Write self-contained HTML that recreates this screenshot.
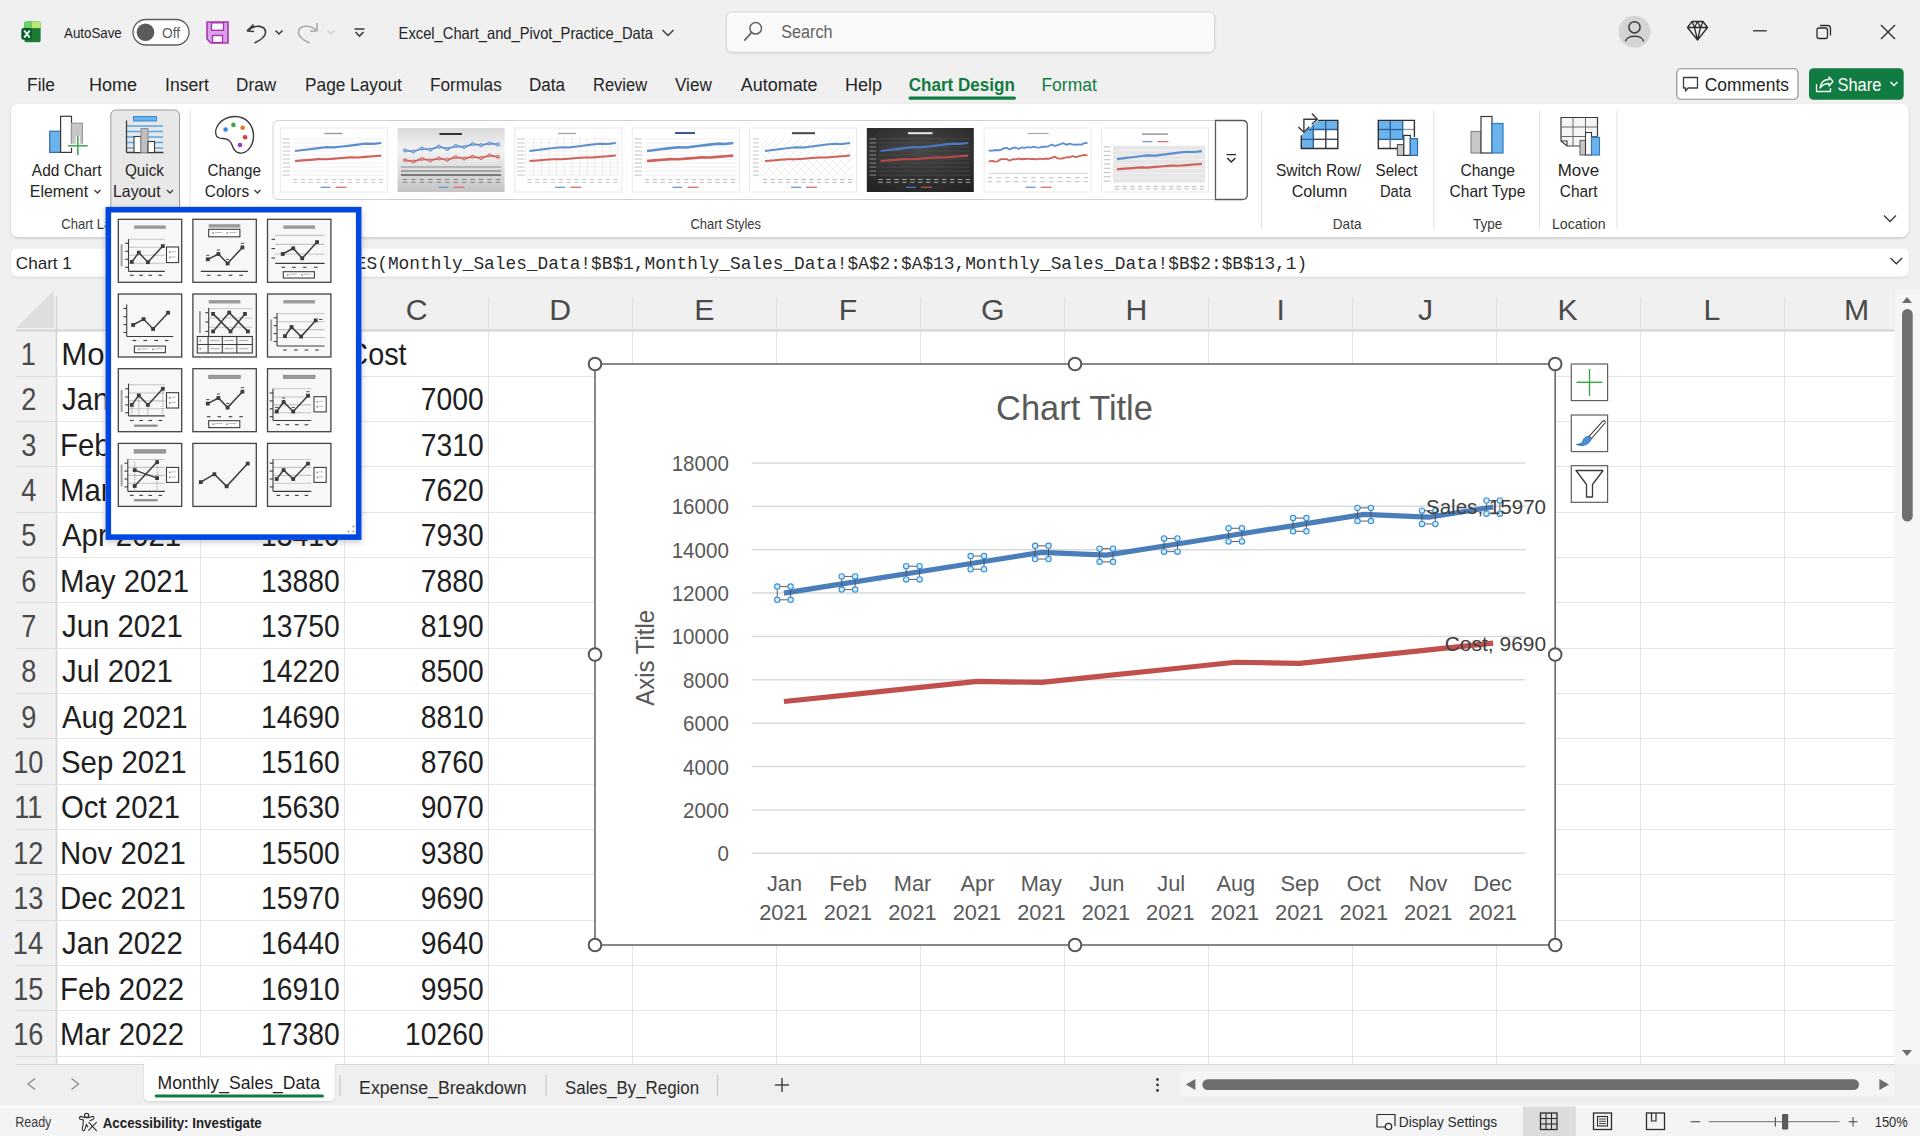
<!DOCTYPE html>
<html><head><meta charset="utf-8"><title>Excel</title>
<style>html,body{margin:0;padding:0;background:#f0f0f0;overflow:hidden;width:1920px;height:1136px}
svg{display:block;font-family:"Liberation Sans",sans-serif}</style></head>
<body><svg width="1920" height="1136" viewBox="0 0 1920 1136">
<rect x="0.00" y="0.00" width="1920.00" height="1136.00" fill="#f0f0f0"/>
<defs><clipPath id="xlc"><rect x="24.2" y="21.3" width="16.6" height="21.1" rx="2.6"/></clipPath></defs>
<g clip-path="url(#xlc)">
<rect x="24.20" y="21.30" width="16.60" height="21.10" fill="#1d7a34"/>
<rect x="24.20" y="21.30" width="7.60" height="6.80" fill="#6bd16a"/>
<rect x="31.80" y="21.30" width="9.00" height="6.80" fill="#bde872"/>
</g>
<rect x="21.30" y="27.90" width="10.50" height="11.90" fill="#0c5a2a" rx="2.20"/>
<path d="M24.2 30.5 L29.7 37.6 M29.7 30.5 L24.2 37.6" fill="none" stroke="#dcfbe9" stroke-width="2.00"/>
<text transform="translate(64.00 37.50) scale(0.9557 1)" font-family="Liberation Sans" font-size="13.95" font-weight="400" fill="#242424">AutoSave</text>
<rect x="133.00" y="19.50" width="56.00" height="25.50" fill="#ffffff" stroke="#5f5f5f" stroke-width="1.30" rx="12.75"/>
<circle cx="145.50" cy="32.20" r="8.80" fill="#5b5b5b"/>
<text transform="translate(162.00 37.50) scale(0.9471 1)" font-family="Liberation Sans" font-size="14.53" font-weight="400" fill="#5b5b5b">Off</text>
<path d="M207 22 H228 V43 H211 L207 39 Z" fill="#dca0e6" stroke="#a339b0" stroke-width="1.60"/>
<rect x="211.50" y="22.80" width="12.00" height="7.50" fill="#ffffff" stroke="#a339b0" stroke-width="1.40"/>
<rect x="212.50" y="35.50" width="10.00" height="7.00" fill="#ffffff" stroke="#a339b0" stroke-width="1.40"/>
<path d="M247 31 L253.5 24.5 M247 31 L254 31.5 M247.5 31 C 254 24 266 25 265.5 33 C 265 37 261 40 254.5 43" fill="none" stroke="#3b3b3b" stroke-width="1.60"/>
<path d="M275.5 30.5 L279 34 L282.5 30.5" fill="none" stroke="#3b3b3b" stroke-width="1.50"/>
<path d="M317 31 L317 23 M317 31 L310 31 M316.5 30.5 C 310 24 298 25 298.5 33 C 299 37 303 40 309.5 43" fill="none" stroke="#a8a8a8" stroke-width="1.60"/>
<path d="M327.5 30.5 L331 34 L334.5 30.5" fill="none" stroke="#cfcfcf" stroke-width="1.50"/>
<line x1="354.50" y1="29.00" x2="364.50" y2="29.00" stroke="#3b3b3b" stroke-width="1.50"/>
<path d="M355.5 32 L359.5 36 L363.5 32" fill="none" stroke="#3b3b3b" stroke-width="1.60"/>
<text transform="translate(398.60 38.70) scale(0.9043 1)" font-family="Liberation Sans" font-size="16.28" font-weight="400" fill="#242424">Excel_Chart_and_Pivot_Practice_Data</text>
<path d="M662.5 30 L668 35.5 L673.5 30" fill="none" stroke="#3b3b3b" stroke-width="1.50"/>
<rect x="726.50" y="12.00" width="488.00" height="40.00" fill="#fafafa" stroke="#d6d6d6" stroke-width="1.00" rx="5.00" filter="url(#sh1)"/>
<circle cx="755.70" cy="28.30" r="5.80" fill="none" stroke="#616161" stroke-width="1.50"/>
<line x1="751.60" y1="32.40" x2="744.30" y2="40.60" stroke="#616161" stroke-width="1.60"/>
<text transform="translate(781.20 38.30) scale(0.9008 1)" font-family="Liberation Sans" font-size="18.02" font-weight="400" fill="#616161">Search</text>
<circle cx="1634.50" cy="31.80" r="16.00" fill="#d4d4d4"/>
<circle cx="1634.50" cy="27.30" r="5.60" fill="none" stroke="#3b3b3b" stroke-width="1.50"/>
<path d="M1625.5 41.5 C 1626 34.5 1643 34.5 1643.5 41.5" fill="none" stroke="#3b3b3b" stroke-width="1.50"/>
<path d="M1687.5 27.5 L1692 21.5 H1703 L1707.5 27.5 L1697.5 40 Z M1687.5 27.5 H1707.5 M1692 21.5 L1694.5 27.5 L1697.5 40 L1700.5 27.5 L1703 21.5 M1697.5 21.5 L1694.5 27.5 M1697.5 21.5 L1700.5 27.5" fill="none" stroke="#2b2b2b" stroke-width="1.30" stroke-linejoin="round"/>
<line x1="1753.00" y1="30.80" x2="1766.70" y2="30.80" stroke="#2b2b2b" stroke-width="1.30"/>
<rect x="1817.00" y="28.00" width="10.50" height="10.50" fill="none" stroke="#2b2b2b" stroke-width="1.30" rx="2.00"/>
<path d="M1820 25.5 H1827.5 C1829.5 25.5 1830.5 26.5 1830.5 28.5 V35.5" fill="none" stroke="#2b2b2b" stroke-width="1.30"/>
<path d="M1881 25 L1895 39 M1895 25 L1881 39" fill="none" stroke="#2b2b2b" stroke-width="1.40"/>
<text transform="translate(27.04 91.20) scale(0.9640 1)" font-family="Liberation Sans" font-size="18.02" font-weight="400" fill="#242424">File</text>
<text transform="translate(89.00 91.20)" font-family="Liberation Sans" font-size="18.02" font-weight="400" fill="#242424">Home</text>
<text transform="translate(165.02 91.20) scale(0.9761 1)" font-family="Liberation Sans" font-size="18.02" font-weight="400" fill="#242424">Insert</text>
<text transform="translate(236.05 91.20) scale(0.9517 1)" font-family="Liberation Sans" font-size="18.02" font-weight="400" fill="#242424">Draw</text>
<text transform="translate(305.04 91.20) scale(0.9584 1)" font-family="Liberation Sans" font-size="18.02" font-weight="400" fill="#242424">Page Layout</text>
<text transform="translate(429.94 91.20) scale(0.9572 1)" font-family="Liberation Sans" font-size="18.02" font-weight="400" fill="#242424">Formulas</text>
<text transform="translate(528.95 91.20) scale(0.9491 1)" font-family="Liberation Sans" font-size="18.02" font-weight="400" fill="#242424">Data</text>
<text transform="translate(592.98 91.20) scale(0.9160 1)" font-family="Liberation Sans" font-size="18.02" font-weight="400" fill="#242424">Review</text>
<text transform="translate(675.00 91.20) scale(0.9493 1)" font-family="Liberation Sans" font-size="18.02" font-weight="400" fill="#242424">View</text>
<text transform="translate(740.80 91.20) scale(0.9962 1)" font-family="Liberation Sans" font-size="18.02" font-weight="400" fill="#242424">Automate</text>
<text transform="translate(845.00 91.20)" font-family="Liberation Sans" font-size="18.02" font-weight="400" fill="#242424">Help</text>
<text transform="translate(908.70 91.20) scale(0.9477 1)" font-family="Liberation Sans" font-size="18.02" font-weight="700" fill="#107c41">Chart Design</text>
<text transform="translate(1041.43 91.20) scale(0.9706 1)" font-family="Liberation Sans" font-size="18.02" font-weight="400" fill="#107c41">Format</text>
<rect x="908.50" y="96.50" width="107.50" height="3.20" fill="#107c41" rx="1.60"/>
<rect x="1676.80" y="68.80" width="121.20" height="30.50" fill="#ffffff" stroke="#8a8a8a" stroke-width="1.10" rx="4.00"/>
<path d="M1683.5 77.5 H1697.5 V88 H1688 L1685.5 91 V88 H1683.5 Z" fill="none" stroke="#3b3b3b" stroke-width="1.30" stroke-linejoin="round"/>
<text transform="translate(1704.70 90.80) scale(0.9680 1)" font-family="Liberation Sans" font-size="18.02" font-weight="400" fill="#242424">Comments</text>
<rect x="1809.00" y="68.30" width="94.70" height="31.40" fill="#107c41" rx="4.50"/>
<path d="M1816.5 84 V91.5 H1830.5 V88 M1820 88 C1821 81 1825 79.5 1829 79.5 V77 L1833 81.5 L1829 86 V83.5 C1825.5 83.5 1822.5 84.5 1820 88 Z" fill="none" stroke="#ffffff" stroke-width="1.30" stroke-linejoin="round"/>
<text transform="translate(1837.50 90.80) scale(0.9115 1)" font-family="Liberation Sans" font-size="18.02" font-weight="400" fill="#ffffff">Share</text>
<path d="M1890.5 82 L1894 85.5 L1897.5 82" fill="none" stroke="#ffffff" stroke-width="1.50"/>
<defs><filter id="sh1" x="-5%" y="-20%" width="110%" height="150%"><feDropShadow dx="0" dy="1" stdDeviation="1" flood-color="#000" flood-opacity="0.12"/></filter><filter id="sh2" x="-2%" y="-10%" width="104%" height="130%"><feDropShadow dx="0" dy="1.5" stdDeviation="1.5" flood-color="#000" flood-opacity="0.16"/></filter><filter id="sh3" x="-10%" y="-10%" width="120%" height="120%"><feDropShadow dx="0" dy="2" stdDeviation="3" flood-color="#000" flood-opacity="0.22"/></filter></defs>
<rect x="11.00" y="104.00" width="1897.50" height="133.00" fill="#ffffff" rx="8.00" filter="url(#sh2)"/>
<rect x="49.70" y="131.20" width="10.90" height="21.20" fill="#6cb2eb" stroke="#2f6fb5" stroke-width="1.20"/>
<rect x="60.60" y="116.30" width="10.90" height="36.10" fill="#ffffff" stroke="#3a3a3a" stroke-width="1.20"/>
<rect x="71.50" y="123.20" width="10.90" height="22.00" fill="#c8c8c8" stroke="#9a9a9a" stroke-width="1.20"/>
<line x1="68.00" y1="145.75" x2="87.60" y2="145.75" stroke="#ffffff" stroke-width="4.00"/>
<line x1="77.80" y1="135.80" x2="77.80" y2="155.30" stroke="#ffffff" stroke-width="4.00"/>
<line x1="68.00" y1="145.75" x2="87.60" y2="145.75" stroke="#4aa552" stroke-width="1.60"/>
<line x1="77.80" y1="135.80" x2="77.80" y2="155.30" stroke="#4aa552" stroke-width="1.60"/>
<text transform="translate(31.80 175.80) scale(0.9523 1)" font-family="Liberation Sans" font-size="16.28" font-weight="400" fill="#242424">Add Chart</text>
<text transform="translate(29.82 197.20) scale(0.9755 1)" font-family="Liberation Sans" font-size="16.28" font-weight="400" fill="#242424">Element</text>
<path d="M94.5 190 L97.5 193 L100.5 190" fill="none" stroke="#3b3b3b" stroke-width="1.30"/>
<rect x="110.80" y="110.00" width="68.70" height="140.00" fill="#e8e8e8" stroke="#9c9c9c" stroke-width="1.00" rx="5.00"/>
<rect x="133.50" y="116.50" width="23.00" height="4.50" fill="#6cb2eb" stroke="#3a8ad6" stroke-width="1.00"/>
<line x1="126.50" y1="126.00" x2="163.00" y2="126.00" stroke="#5aa6e6" stroke-width="1.60"/>
<line x1="126.50" y1="131.50" x2="163.00" y2="131.50" stroke="#5aa6e6" stroke-width="1.60"/>
<line x1="126.50" y1="137.00" x2="163.00" y2="137.00" stroke="#5aa6e6" stroke-width="1.60"/>
<line x1="126.50" y1="142.50" x2="163.00" y2="142.50" stroke="#5aa6e6" stroke-width="1.60"/>
<line x1="126.50" y1="148.00" x2="163.00" y2="148.00" stroke="#5aa6e6" stroke-width="1.60"/>
<line x1="126.50" y1="120.50" x2="126.50" y2="152.50" stroke="#3a3a3a" stroke-width="1.30"/>
<line x1="126.50" y1="152.50" x2="163.50" y2="152.50" stroke="#3a3a3a" stroke-width="1.30"/>
<rect x="134.00" y="136.50" width="7.00" height="16.00" fill="#ffffff" stroke="#3a3a3a" stroke-width="1.10"/>
<rect x="141.00" y="128.50" width="7.00" height="24.00" fill="#c0c0c0" stroke="#909090" stroke-width="1.10"/>
<rect x="148.00" y="141.50" width="6.50" height="11.00" fill="#ffffff" stroke="#3a3a3a" stroke-width="1.10"/>
<text transform="translate(125.00 175.80) scale(0.9353 1)" font-family="Liberation Sans" font-size="16.28" font-weight="400" fill="#242424">Quick</text>
<text transform="translate(113.03 197.20) scale(0.9727 1)" font-family="Liberation Sans" font-size="16.28" font-weight="400" fill="#242424">Layout</text>
<path d="M167 190 L170 193 L173 190" fill="none" stroke="#3b3b3b" stroke-width="1.30"/>
<line x1="190.00" y1="110.00" x2="190.00" y2="206.00" stroke="#e1e1e1" stroke-width="1.00"/>
<path d="M229 140.5 C225 136.5 219 140.5 216.5 136 C213.5 130 219 117.5 234 116.5 C247 116 254 126 253.5 137 C253 147 246 154 239.5 153 C234.5 152.5 233 148 232 145 C231 142.5 230.5 141.5 229 140.5 Z" fill="#ffffff" stroke="#3a3a3a" stroke-width="1.40"/>
<circle cx="225.60" cy="129.50" r="2.30" fill="#2f8be0"/>
<circle cx="233.40" cy="124.90" r="2.30" fill="#3aa845"/>
<circle cx="242.60" cy="127.80" r="2.30" fill="#e8792a"/>
<circle cx="245.10" cy="137.30" r="2.30" fill="#e03e3e"/>
<circle cx="240.00" cy="145.00" r="2.30" fill="#8e3ec4"/>
<text transform="translate(207.60 175.80) scale(0.9380 1)" font-family="Liberation Sans" font-size="16.28" font-weight="400" fill="#242424">Change</text>
<text transform="translate(204.80 197.20) scale(0.9431 1)" font-family="Liberation Sans" font-size="16.28" font-weight="400" fill="#242424">Colors</text>
<path d="M254.5 190 L257.5 193 L260.5 190" fill="none" stroke="#3b3b3b" stroke-width="1.30"/>
<rect x="273.00" y="120.50" width="974.00" height="79.00" fill="#ffffff" stroke="#d1d1d1" stroke-width="1.00" rx="5.00"/>
<path d="M1215.5 120.5 H1242.5 Q1247.3 120.5 1247.3 125.3 V194.7 Q1247.3 199.5 1242.5 199.5 H1215.5 Z" fill="#ffffff" stroke="#5a5a5a" stroke-width="1.30"/>
<line x1="1226.50" y1="154.60" x2="1236.00" y2="154.60" stroke="#2b2b2b" stroke-width="1.30"/>
<path d="M1227.2 158 L1231.3 162 L1235.4 158" fill="none" stroke="#2b2b2b" stroke-width="1.50"/>
<text transform="translate(690.40 228.70) scale(0.8594 1)" font-family="Liberation Sans" font-size="15.12" font-weight="400" fill="#3b3b3b">Chart Styles</text>
<text transform="translate(61.30 228.70) scale(0.8602 1)" font-family="Liberation Sans" font-size="15.12" font-weight="400" fill="#3b3b3b">Chart Layouts</text>
<line x1="1261.50" y1="110.50" x2="1261.50" y2="229.00" stroke="#e1e1e1" stroke-width="1.00"/>
<line x1="1434.00" y1="110.50" x2="1434.00" y2="229.00" stroke="#e1e1e1" stroke-width="1.00"/>
<line x1="1539.60" y1="110.50" x2="1539.60" y2="229.00" stroke="#e1e1e1" stroke-width="1.00"/>
<line x1="1617.00" y1="110.50" x2="1617.00" y2="229.00" stroke="#e1e1e1" stroke-width="1.00"/>
<rect x="1301.30" y="120.40" width="36.50" height="28.10" fill="#ffffff"/>
<rect x="1301.30" y="120.40" width="36.50" height="9.10" fill="#6cb2eb"/>
<rect x="1301.30" y="120.40" width="12.00" height="28.10" fill="#6cb2eb"/>
<line x1="1301.30" y1="129.50" x2="1337.80" y2="129.50" stroke="#2a5f9a" stroke-width="1.30"/>
<line x1="1301.30" y1="139.40" x2="1337.80" y2="139.40" stroke="#2a5f9a" stroke-width="1.30"/>
<line x1="1313.30" y1="120.40" x2="1313.30" y2="148.50" stroke="#2a5f9a" stroke-width="1.30"/>
<line x1="1325.70" y1="120.40" x2="1325.70" y2="148.50" stroke="#2a5f9a" stroke-width="1.30"/>
<line x1="1313.30" y1="139.40" x2="1337.80" y2="139.40" stroke="#4a4a4a" stroke-width="1.30"/>
<line x1="1325.70" y1="129.50" x2="1325.70" y2="148.50" stroke="#4a4a4a" stroke-width="1.30"/>
<path d="M1301.3 134 V148.5 H1337.8 V120.4 H1318" fill="none" stroke="#2f2f2f" stroke-width="1.40"/>
<path d="M1300 119 H1319.5 L1300 136.5 Z" fill="#ffffff"/>
<path d="M1296 137 L1322 113" fill="none" stroke="#ffffff" stroke-width="3.20"/>
<path d="M1303.9 131.5 V119.3 H1317" fill="none" stroke="#3a3a3a" stroke-width="1.40"/>
<path d="M1311.8 113.6 L1317.3 119.2 L1311.8 124.2" fill="none" stroke="#3a3a3a" stroke-width="1.40"/>
<path d="M1298.3 127 L1303.9 132.3 L1309.3 126.8" fill="none" stroke="#3a3a3a" stroke-width="1.40"/>
<text transform="translate(1276.00 175.80) scale(0.9515 1)" font-family="Liberation Sans" font-size="16.28" font-weight="400" fill="#242424">Switch Row/</text>
<text transform="translate(1291.70 197.20) scale(0.9909 1)" font-family="Liberation Sans" font-size="16.28" font-weight="400" fill="#242424">Column</text>
<rect x="1378.30" y="120.40" width="36.10" height="28.10" fill="#ffffff"/>
<rect x="1378.30" y="120.40" width="24.40" height="19.00" fill="#6cb2eb"/>
<line x1="1378.30" y1="129.50" x2="1402.70" y2="129.50" stroke="#2a5f9a" stroke-width="1.30"/>
<line x1="1402.70" y1="129.50" x2="1414.40" y2="129.50" stroke="#9a9a9a" stroke-width="1.30"/>
<line x1="1390.30" y1="120.40" x2="1390.30" y2="148.50" stroke="#2a5f9a" stroke-width="1.30"/>
<line x1="1378.30" y1="139.40" x2="1402.70" y2="139.40" stroke="#2a5f9a" stroke-width="1.30"/>
<line x1="1402.70" y1="120.40" x2="1402.70" y2="139.40" stroke="#2a5f9a" stroke-width="1.30"/>
<line x1="1390.30" y1="139.40" x2="1390.30" y2="148.50" stroke="#8a8a8a" stroke-width="1.30"/>
<path d="M1398 148.5 H1378.3 V120.4 H1414.4 V137" fill="none" stroke="#2f2f2f" stroke-width="1.40"/>
<rect x="1397.40" y="144.60" width="6.40" height="10.80" fill="#c8c8c8" stroke="#5a5a5a" stroke-width="1.20"/>
<rect x="1403.80" y="135.40" width="6.50" height="20.00" fill="#ffffff" stroke="#2f2f2f" stroke-width="1.20"/>
<rect x="1410.30" y="138.60" width="7.20" height="16.80" fill="#6cb2eb" stroke="#2a6ab0" stroke-width="1.20"/>
<text transform="translate(1375.60 175.80) scale(0.9280 1)" font-family="Liberation Sans" font-size="16.28" font-weight="400" fill="#242424">Select</text>
<text transform="translate(1379.89 197.20) scale(0.9093 1)" font-family="Liberation Sans" font-size="16.28" font-weight="400" fill="#242424">Data</text>
<text transform="translate(1332.80 228.70) scale(0.8981 1)" font-family="Liberation Sans" font-size="15.12" font-weight="400" fill="#3b3b3b">Data</text>
<rect x="1471.00" y="131.50" width="10.00" height="21.50" fill="#c8c8c8" stroke="#8a8a8a" stroke-width="1.20"/>
<rect x="1481.00" y="116.50" width="11.00" height="36.50" fill="#ffffff" stroke="#3a3a3a" stroke-width="1.20"/>
<rect x="1492.00" y="123.50" width="11.00" height="29.50" fill="#6cb2eb" stroke="#2a7ac4" stroke-width="1.20"/>
<text transform="translate(1460.40 175.80) scale(0.9591 1)" font-family="Liberation Sans" font-size="16.28" font-weight="400" fill="#242424">Change</text>
<text transform="translate(1449.60 197.20) scale(0.9558 1)" font-family="Liberation Sans" font-size="16.28" font-weight="400" fill="#242424">Chart Type</text>
<text transform="translate(1473.00 228.70) scale(0.8963 1)" font-family="Liberation Sans" font-size="15.12" font-weight="400" fill="#3b3b3b">Type</text>
<path d="M1561 117.5 H1597.5 V146 H1567 L1561 141 Z" fill="#f5f5f5" stroke="#3a3a3a" stroke-width="1.20"/>
<line x1="1561.00" y1="127.00" x2="1597.50" y2="127.00" stroke="#6a6a6a" stroke-width="1.00"/>
<line x1="1561.00" y1="136.50" x2="1597.50" y2="136.50" stroke="#6a6a6a" stroke-width="1.00"/>
<line x1="1573.00" y1="117.50" x2="1573.00" y2="146.00" stroke="#6a6a6a" stroke-width="1.00"/>
<line x1="1585.50" y1="117.50" x2="1585.50" y2="146.00" stroke="#6a6a6a" stroke-width="1.00"/>
<path d="M1561 141 H1567 V146" fill="none" stroke="#3a3a3a" stroke-width="1.10"/>
<rect x="1580.00" y="140.50" width="5.50" height="14.50" fill="#c8c8c8" stroke="#6a6a6a" stroke-width="1.10"/>
<rect x="1585.50" y="132.50" width="6.00" height="22.50" fill="#ffffff" stroke="#3a3a3a" stroke-width="1.10"/>
<rect x="1591.50" y="137.50" width="8.00" height="17.50" fill="#6cb2eb" stroke="#2a7ac4" stroke-width="1.10"/>
<text transform="translate(1557.76 175.80) scale(1.0380 1)" font-family="Liberation Sans" font-size="16.28" font-weight="400" fill="#242424">Move</text>
<text transform="translate(1559.80 197.20) scale(0.9465 1)" font-family="Liberation Sans" font-size="16.28" font-weight="400" fill="#242424">Chart</text>
<text transform="translate(1551.96 228.70) scale(0.9386 1)" font-family="Liberation Sans" font-size="15.12" font-weight="400" fill="#3b3b3b">Location</text>
<path d="M1884 215.5 L1890 221.5 L1896 215.5" fill="none" stroke="#3b3b3b" stroke-width="1.40"/>
<rect x="11.50" y="248.50" width="1897.00" height="28.00" fill="#ffffff" rx="5.00" filter="url(#sh1)"/>
<text transform="translate(15.80 269.00) scale(0.9968 1)" font-family="Liberation Sans" font-size="17.15" font-weight="400" fill="#1f1f1f">Chart 1</text>
<text transform="translate(302.40 269.00)" font-family="Liberation Mono" font-size="17.82" font-weight="400" fill="#2b2b2b">=SERIES(Monthly_Sales_Data!$B$1,Monthly_Sales_Data!$A$2:$A$13,Monthly_Sales_Data!$B$2:$B$13,1)</text>
<path d="M1890.5 258 L1896.3 263.8 L1902.1 258" fill="none" stroke="#3b3b3b" stroke-width="1.40"/>
<rect x="56.80" y="331.00" width="1837.70" height="733.00" fill="#ffffff"/>
<path d="M54 290.5 V328 H16 Z" fill="#dedede"/>
<line x1="16.00" y1="330.50" x2="1894.50" y2="330.50" stroke="#d4d4d4" stroke-width="2.00"/>
<line x1="56.50" y1="296.00" x2="56.50" y2="1064.00" stroke="#d4d4d4" stroke-width="1.50"/>
<line x1="16.00" y1="376.50" x2="56.50" y2="376.50" stroke="#dcdcdc" stroke-width="1.00"/>
<line x1="56.50" y1="376.50" x2="1894.50" y2="376.50" stroke="#e4e4e4" stroke-width="1.00"/>
<line x1="16.00" y1="421.50" x2="56.50" y2="421.50" stroke="#dcdcdc" stroke-width="1.00"/>
<line x1="56.50" y1="421.50" x2="1894.50" y2="421.50" stroke="#e4e4e4" stroke-width="1.00"/>
<line x1="16.00" y1="466.50" x2="56.50" y2="466.50" stroke="#dcdcdc" stroke-width="1.00"/>
<line x1="56.50" y1="466.50" x2="1894.50" y2="466.50" stroke="#e4e4e4" stroke-width="1.00"/>
<line x1="16.00" y1="512.50" x2="56.50" y2="512.50" stroke="#dcdcdc" stroke-width="1.00"/>
<line x1="56.50" y1="512.50" x2="1894.50" y2="512.50" stroke="#e4e4e4" stroke-width="1.00"/>
<line x1="16.00" y1="557.50" x2="56.50" y2="557.50" stroke="#dcdcdc" stroke-width="1.00"/>
<line x1="56.50" y1="557.50" x2="1894.50" y2="557.50" stroke="#e4e4e4" stroke-width="1.00"/>
<line x1="16.00" y1="602.50" x2="56.50" y2="602.50" stroke="#dcdcdc" stroke-width="1.00"/>
<line x1="56.50" y1="602.50" x2="1894.50" y2="602.50" stroke="#e4e4e4" stroke-width="1.00"/>
<line x1="16.00" y1="648.50" x2="56.50" y2="648.50" stroke="#dcdcdc" stroke-width="1.00"/>
<line x1="56.50" y1="648.50" x2="1894.50" y2="648.50" stroke="#e4e4e4" stroke-width="1.00"/>
<line x1="16.00" y1="693.50" x2="56.50" y2="693.50" stroke="#dcdcdc" stroke-width="1.00"/>
<line x1="56.50" y1="693.50" x2="1894.50" y2="693.50" stroke="#e4e4e4" stroke-width="1.00"/>
<line x1="16.00" y1="738.50" x2="56.50" y2="738.50" stroke="#dcdcdc" stroke-width="1.00"/>
<line x1="56.50" y1="738.50" x2="1894.50" y2="738.50" stroke="#e4e4e4" stroke-width="1.00"/>
<line x1="16.00" y1="784.50" x2="56.50" y2="784.50" stroke="#dcdcdc" stroke-width="1.00"/>
<line x1="56.50" y1="784.50" x2="1894.50" y2="784.50" stroke="#e4e4e4" stroke-width="1.00"/>
<line x1="16.00" y1="829.50" x2="56.50" y2="829.50" stroke="#dcdcdc" stroke-width="1.00"/>
<line x1="56.50" y1="829.50" x2="1894.50" y2="829.50" stroke="#e4e4e4" stroke-width="1.00"/>
<line x1="16.00" y1="874.50" x2="56.50" y2="874.50" stroke="#dcdcdc" stroke-width="1.00"/>
<line x1="56.50" y1="874.50" x2="1894.50" y2="874.50" stroke="#e4e4e4" stroke-width="1.00"/>
<line x1="16.00" y1="920.50" x2="56.50" y2="920.50" stroke="#dcdcdc" stroke-width="1.00"/>
<line x1="56.50" y1="920.50" x2="1894.50" y2="920.50" stroke="#e4e4e4" stroke-width="1.00"/>
<line x1="16.00" y1="965.50" x2="56.50" y2="965.50" stroke="#dcdcdc" stroke-width="1.00"/>
<line x1="56.50" y1="965.50" x2="1894.50" y2="965.50" stroke="#e4e4e4" stroke-width="1.00"/>
<line x1="16.00" y1="1010.50" x2="56.50" y2="1010.50" stroke="#dcdcdc" stroke-width="1.00"/>
<line x1="56.50" y1="1010.50" x2="1894.50" y2="1010.50" stroke="#e4e4e4" stroke-width="1.00"/>
<line x1="16.00" y1="1056.50" x2="56.50" y2="1056.50" stroke="#dcdcdc" stroke-width="1.00"/>
<line x1="56.50" y1="1056.50" x2="1894.50" y2="1056.50" stroke="#e4e4e4" stroke-width="1.00"/>
<line x1="200.50" y1="297.00" x2="200.50" y2="329.00" stroke="#dedede" stroke-width="1.00"/>
<line x1="200.50" y1="331.00" x2="200.50" y2="1064.00" stroke="#e4e4e4" stroke-width="1.00"/>
<line x1="344.50" y1="297.00" x2="344.50" y2="329.00" stroke="#dedede" stroke-width="1.00"/>
<line x1="344.50" y1="331.00" x2="344.50" y2="1064.00" stroke="#e4e4e4" stroke-width="1.00"/>
<line x1="488.50" y1="297.00" x2="488.50" y2="329.00" stroke="#dedede" stroke-width="1.00"/>
<line x1="488.50" y1="331.00" x2="488.50" y2="1064.00" stroke="#e4e4e4" stroke-width="1.00"/>
<line x1="632.50" y1="297.00" x2="632.50" y2="329.00" stroke="#dedede" stroke-width="1.00"/>
<line x1="632.50" y1="331.00" x2="632.50" y2="1064.00" stroke="#e4e4e4" stroke-width="1.00"/>
<line x1="776.50" y1="297.00" x2="776.50" y2="329.00" stroke="#dedede" stroke-width="1.00"/>
<line x1="776.50" y1="331.00" x2="776.50" y2="1064.00" stroke="#e4e4e4" stroke-width="1.00"/>
<line x1="920.50" y1="297.00" x2="920.50" y2="329.00" stroke="#dedede" stroke-width="1.00"/>
<line x1="920.50" y1="331.00" x2="920.50" y2="1064.00" stroke="#e4e4e4" stroke-width="1.00"/>
<line x1="1064.50" y1="297.00" x2="1064.50" y2="329.00" stroke="#dedede" stroke-width="1.00"/>
<line x1="1064.50" y1="331.00" x2="1064.50" y2="1064.00" stroke="#e4e4e4" stroke-width="1.00"/>
<line x1="1208.50" y1="297.00" x2="1208.50" y2="329.00" stroke="#dedede" stroke-width="1.00"/>
<line x1="1208.50" y1="331.00" x2="1208.50" y2="1064.00" stroke="#e4e4e4" stroke-width="1.00"/>
<line x1="1352.50" y1="297.00" x2="1352.50" y2="329.00" stroke="#dedede" stroke-width="1.00"/>
<line x1="1352.50" y1="331.00" x2="1352.50" y2="1064.00" stroke="#e4e4e4" stroke-width="1.00"/>
<line x1="1496.50" y1="297.00" x2="1496.50" y2="329.00" stroke="#dedede" stroke-width="1.00"/>
<line x1="1496.50" y1="331.00" x2="1496.50" y2="1064.00" stroke="#e4e4e4" stroke-width="1.00"/>
<line x1="1640.50" y1="297.00" x2="1640.50" y2="329.00" stroke="#dedede" stroke-width="1.00"/>
<line x1="1640.50" y1="331.00" x2="1640.50" y2="1064.00" stroke="#e4e4e4" stroke-width="1.00"/>
<line x1="1784.50" y1="297.00" x2="1784.50" y2="329.00" stroke="#dedede" stroke-width="1.00"/>
<line x1="1784.50" y1="331.00" x2="1784.50" y2="1064.00" stroke="#e4e4e4" stroke-width="1.00"/>
<text transform="translate(118.28 319.70)" font-family="Liberation Sans" font-size="30.23" font-weight="400" fill="#4a4a4a">A</text>
<text transform="translate(262.25 319.70)" font-family="Liberation Sans" font-size="30.23" font-weight="400" fill="#4a4a4a">B</text>
<text transform="translate(405.73 319.70)" font-family="Liberation Sans" font-size="30.23" font-weight="400" fill="#4a4a4a">C</text>
<text transform="translate(549.19 319.70)" font-family="Liberation Sans" font-size="30.23" font-weight="400" fill="#4a4a4a">D</text>
<text transform="translate(694.16 319.70)" font-family="Liberation Sans" font-size="30.23" font-weight="400" fill="#4a4a4a">E</text>
<text transform="translate(838.63 319.70)" font-family="Liberation Sans" font-size="30.23" font-weight="400" fill="#4a4a4a">F</text>
<text transform="translate(981.10 319.70)" font-family="Liberation Sans" font-size="30.23" font-weight="400" fill="#4a4a4a">G</text>
<text transform="translate(1125.58 319.70)" font-family="Liberation Sans" font-size="30.23" font-weight="400" fill="#4a4a4a">H</text>
<text transform="translate(1276.54 319.70)" font-family="Liberation Sans" font-size="30.23" font-weight="400" fill="#4a4a4a">I</text>
<text transform="translate(1418.01 319.70)" font-family="Liberation Sans" font-size="30.23" font-weight="400" fill="#4a4a4a">J</text>
<text transform="translate(1557.48 319.70)" font-family="Liberation Sans" font-size="30.23" font-weight="400" fill="#4a4a4a">K</text>
<text transform="translate(1703.45 319.70)" font-family="Liberation Sans" font-size="30.23" font-weight="400" fill="#4a4a4a">L</text>
<text transform="translate(1843.92 319.70)" font-family="Liberation Sans" font-size="30.23" font-weight="400" fill="#4a4a4a">M</text>
<text transform="translate(20.79 364.90) scale(0.8900 1)" font-family="Liberation Sans" font-size="30.52" font-weight="400" fill="#4a4a4a">1</text>
<text transform="translate(61.19 364.90) scale(1.0069 1)" font-family="Liberation Sans" font-size="31.00" font-weight="400" fill="#1e1e1e">Mo</text>
<text transform="translate(205.07 364.90) scale(0.9300 1)" font-family="Liberation Sans" font-size="31.00" font-weight="400" fill="#1e1e1e">Sales</text>
<text transform="translate(347.37 364.90) scale(0.9300 1)" font-family="Liberation Sans" font-size="31.00" font-weight="400" fill="#1e1e1e">Cost</text>
<text transform="translate(21.23 410.23) scale(0.8900 1)" font-family="Liberation Sans" font-size="30.52" font-weight="400" fill="#4a4a4a">2</text>
<text transform="translate(62.00 410.23) scale(0.9470 1)" font-family="Liberation Sans" font-size="31.00" font-weight="400" fill="#1e1e1e">Jan 2021</text>
<text transform="translate(261.10 410.23) scale(0.9120 1)" font-family="Liberation Sans" font-size="31.00" font-weight="400" fill="#1e1e1e">12000</text>
<text transform="translate(420.83 410.23) scale(0.9120 1)" font-family="Liberation Sans" font-size="31.00" font-weight="400" fill="#1e1e1e">7000</text>
<text transform="translate(21.23 455.56) scale(0.8900 1)" font-family="Liberation Sans" font-size="30.52" font-weight="400" fill="#4a4a4a">3</text>
<text transform="translate(60.11 455.56) scale(0.9470 1)" font-family="Liberation Sans" font-size="31.00" font-weight="400" fill="#1e1e1e">Feb 2021</text>
<text transform="translate(261.10 455.56) scale(0.9120 1)" font-family="Liberation Sans" font-size="31.00" font-weight="400" fill="#1e1e1e">12470</text>
<text transform="translate(420.83 455.56) scale(0.9120 1)" font-family="Liberation Sans" font-size="31.00" font-weight="400" fill="#1e1e1e">7310</text>
<text transform="translate(21.23 500.89) scale(0.8900 1)" font-family="Liberation Sans" font-size="30.52" font-weight="400" fill="#4a4a4a">4</text>
<text transform="translate(60.11 500.89) scale(0.9470 1)" font-family="Liberation Sans" font-size="31.00" font-weight="400" fill="#1e1e1e">Mar 2021</text>
<text transform="translate(261.10 500.89) scale(0.9120 1)" font-family="Liberation Sans" font-size="31.00" font-weight="400" fill="#1e1e1e">12940</text>
<text transform="translate(420.83 500.89) scale(0.9120 1)" font-family="Liberation Sans" font-size="31.00" font-weight="400" fill="#1e1e1e">7620</text>
<text transform="translate(21.23 546.22) scale(0.8900 1)" font-family="Liberation Sans" font-size="30.52" font-weight="400" fill="#4a4a4a">5</text>
<text transform="translate(62.00 546.22) scale(0.9470 1)" font-family="Liberation Sans" font-size="31.00" font-weight="400" fill="#1e1e1e">Apr 2021</text>
<text transform="translate(261.10 546.22) scale(0.9120 1)" font-family="Liberation Sans" font-size="31.00" font-weight="400" fill="#1e1e1e">13410</text>
<text transform="translate(420.83 546.22) scale(0.9120 1)" font-family="Liberation Sans" font-size="31.00" font-weight="400" fill="#1e1e1e">7930</text>
<text transform="translate(21.23 591.55) scale(0.8900 1)" font-family="Liberation Sans" font-size="30.52" font-weight="400" fill="#4a4a4a">6</text>
<text transform="translate(60.11 591.55) scale(0.9470 1)" font-family="Liberation Sans" font-size="31.00" font-weight="400" fill="#1e1e1e">May 2021</text>
<text transform="translate(261.10 591.55) scale(0.9120 1)" font-family="Liberation Sans" font-size="31.00" font-weight="400" fill="#1e1e1e">13880</text>
<text transform="translate(420.83 591.55) scale(0.9120 1)" font-family="Liberation Sans" font-size="31.00" font-weight="400" fill="#1e1e1e">7880</text>
<text transform="translate(21.23 636.88) scale(0.8900 1)" font-family="Liberation Sans" font-size="30.52" font-weight="400" fill="#4a4a4a">7</text>
<text transform="translate(62.00 636.88) scale(0.9470 1)" font-family="Liberation Sans" font-size="31.00" font-weight="400" fill="#1e1e1e">Jun 2021</text>
<text transform="translate(261.10 636.88) scale(0.9120 1)" font-family="Liberation Sans" font-size="31.00" font-weight="400" fill="#1e1e1e">13750</text>
<text transform="translate(420.83 636.88) scale(0.9120 1)" font-family="Liberation Sans" font-size="31.00" font-weight="400" fill="#1e1e1e">8190</text>
<text transform="translate(21.23 682.21) scale(0.8900 1)" font-family="Liberation Sans" font-size="30.52" font-weight="400" fill="#4a4a4a">8</text>
<text transform="translate(62.00 682.21) scale(0.9470 1)" font-family="Liberation Sans" font-size="31.00" font-weight="400" fill="#1e1e1e">Jul 2021</text>
<text transform="translate(261.10 682.21) scale(0.9120 1)" font-family="Liberation Sans" font-size="31.00" font-weight="400" fill="#1e1e1e">14220</text>
<text transform="translate(420.83 682.21) scale(0.9120 1)" font-family="Liberation Sans" font-size="31.00" font-weight="400" fill="#1e1e1e">8500</text>
<text transform="translate(21.23 727.54) scale(0.8900 1)" font-family="Liberation Sans" font-size="30.52" font-weight="400" fill="#4a4a4a">9</text>
<text transform="translate(62.00 727.54) scale(0.9470 1)" font-family="Liberation Sans" font-size="31.00" font-weight="400" fill="#1e1e1e">Aug 2021</text>
<text transform="translate(261.10 727.54) scale(0.9120 1)" font-family="Liberation Sans" font-size="31.00" font-weight="400" fill="#1e1e1e">14690</text>
<text transform="translate(420.83 727.54) scale(0.9120 1)" font-family="Liberation Sans" font-size="31.00" font-weight="400" fill="#1e1e1e">8810</text>
<text transform="translate(13.24 772.87) scale(0.8900 1)" font-family="Liberation Sans" font-size="30.52" font-weight="400" fill="#4a4a4a">10</text>
<text transform="translate(61.05 772.87) scale(0.9470 1)" font-family="Liberation Sans" font-size="31.00" font-weight="400" fill="#1e1e1e">Sep 2021</text>
<text transform="translate(261.10 772.87) scale(0.9120 1)" font-family="Liberation Sans" font-size="31.00" font-weight="400" fill="#1e1e1e">15160</text>
<text transform="translate(420.83 772.87) scale(0.9120 1)" font-family="Liberation Sans" font-size="31.00" font-weight="400" fill="#1e1e1e">8760</text>
<text transform="translate(14.25 818.20) scale(0.8900 1)" font-family="Liberation Sans" font-size="30.52" font-weight="400" fill="#4a4a4a">11</text>
<text transform="translate(61.05 818.20) scale(0.9470 1)" font-family="Liberation Sans" font-size="31.00" font-weight="400" fill="#1e1e1e">Oct 2021</text>
<text transform="translate(261.10 818.20) scale(0.9120 1)" font-family="Liberation Sans" font-size="31.00" font-weight="400" fill="#1e1e1e">15630</text>
<text transform="translate(420.83 818.20) scale(0.9120 1)" font-family="Liberation Sans" font-size="31.00" font-weight="400" fill="#1e1e1e">9070</text>
<text transform="translate(13.24 863.53) scale(0.8900 1)" font-family="Liberation Sans" font-size="30.52" font-weight="400" fill="#4a4a4a">12</text>
<text transform="translate(60.11 863.53) scale(0.9470 1)" font-family="Liberation Sans" font-size="31.00" font-weight="400" fill="#1e1e1e">Nov 2021</text>
<text transform="translate(261.10 863.53) scale(0.9120 1)" font-family="Liberation Sans" font-size="31.00" font-weight="400" fill="#1e1e1e">15500</text>
<text transform="translate(420.83 863.53) scale(0.9120 1)" font-family="Liberation Sans" font-size="31.00" font-weight="400" fill="#1e1e1e">9380</text>
<text transform="translate(13.24 908.86) scale(0.8900 1)" font-family="Liberation Sans" font-size="30.52" font-weight="400" fill="#4a4a4a">13</text>
<text transform="translate(60.11 908.86) scale(0.9470 1)" font-family="Liberation Sans" font-size="31.00" font-weight="400" fill="#1e1e1e">Dec 2021</text>
<text transform="translate(261.10 908.86) scale(0.9120 1)" font-family="Liberation Sans" font-size="31.00" font-weight="400" fill="#1e1e1e">15970</text>
<text transform="translate(420.83 908.86) scale(0.9120 1)" font-family="Liberation Sans" font-size="31.00" font-weight="400" fill="#1e1e1e">9690</text>
<text transform="translate(12.79 954.19) scale(0.8900 1)" font-family="Liberation Sans" font-size="30.52" font-weight="400" fill="#4a4a4a">14</text>
<text transform="translate(62.00 954.19) scale(0.9470 1)" font-family="Liberation Sans" font-size="31.00" font-weight="400" fill="#1e1e1e">Jan 2022</text>
<text transform="translate(261.10 954.19) scale(0.9120 1)" font-family="Liberation Sans" font-size="31.00" font-weight="400" fill="#1e1e1e">16440</text>
<text transform="translate(420.83 954.19) scale(0.9120 1)" font-family="Liberation Sans" font-size="31.00" font-weight="400" fill="#1e1e1e">9640</text>
<text transform="translate(13.24 999.52) scale(0.8900 1)" font-family="Liberation Sans" font-size="30.52" font-weight="400" fill="#4a4a4a">15</text>
<text transform="translate(60.11 999.52) scale(0.9470 1)" font-family="Liberation Sans" font-size="31.00" font-weight="400" fill="#1e1e1e">Feb 2022</text>
<text transform="translate(261.10 999.52) scale(0.9120 1)" font-family="Liberation Sans" font-size="31.00" font-weight="400" fill="#1e1e1e">16910</text>
<text transform="translate(420.83 999.52) scale(0.9120 1)" font-family="Liberation Sans" font-size="31.00" font-weight="400" fill="#1e1e1e">9950</text>
<text transform="translate(13.24 1044.85) scale(0.8900 1)" font-family="Liberation Sans" font-size="30.52" font-weight="400" fill="#4a4a4a">16</text>
<text transform="translate(60.11 1044.85) scale(0.9470 1)" font-family="Liberation Sans" font-size="31.00" font-weight="400" fill="#1e1e1e">Mar 2022</text>
<text transform="translate(261.10 1044.85) scale(0.9120 1)" font-family="Liberation Sans" font-size="31.00" font-weight="400" fill="#1e1e1e">17380</text>
<text transform="translate(405.10 1044.85) scale(0.9120 1)" font-family="Liberation Sans" font-size="31.00" font-weight="400" fill="#1e1e1e">10260</text>
<rect x="1895.00" y="290.00" width="25.00" height="774.00" fill="#f5f5f5"/>
<path d="M1902 303 L1907 297 L1912 303 Z" fill="#6e6e6e"/>
<rect x="1902.00" y="309.00" width="10.70" height="212.50" fill="#707070" rx="5.30"/>
<path d="M1902 1050 L1907 1056 L1912 1050 Z" fill="#6e6e6e"/>
<rect x="0.00" y="1064.00" width="1920.00" height="42.00" fill="#efefef"/>
<line x1="16.00" y1="1064.50" x2="1894.50" y2="1064.50" stroke="#d8d8d8" stroke-width="1.00"/>
<path d="M35 1078.5 L28 1084 L35 1089.5" fill="none" stroke="#8a8a8a" stroke-width="1.30"/>
<path d="M71.5 1078.5 L78.5 1084 L71.5 1089.5" fill="none" stroke="#8a8a8a" stroke-width="1.30"/>
<rect x="144.00" y="1058.00" width="190.70" height="43.00" fill="#ffffff" rx="5.00" filter="url(#sh1)"/>
<rect x="144.00" y="1058.00" width="190.70" height="8.00" fill="#ffffff"/>
<text transform="translate(157.47 1088.80) scale(0.9322 1)" font-family="Liberation Sans" font-size="18.90" font-weight="400" fill="#1f1f1f">Monthly_Sales_Data</text>
<rect x="154.70" y="1094.40" width="169.30" height="3.00" fill="#107c41" rx="1.50"/>
<line x1="340.00" y1="1075.00" x2="340.00" y2="1096.00" stroke="#c8c8c8" stroke-width="1.20"/>
<text transform="translate(359.06 1093.50) scale(0.9385 1)" font-family="Liberation Sans" font-size="18.90" font-weight="400" fill="#2b2b2b">Expense_Breakdown</text>
<line x1="546.00" y1="1075.00" x2="546.00" y2="1096.00" stroke="#c8c8c8" stroke-width="1.20"/>
<text transform="translate(565.00 1093.50) scale(0.8927 1)" font-family="Liberation Sans" font-size="18.90" font-weight="400" fill="#2b2b2b">Sales_By_Region</text>
<line x1="717.50" y1="1075.00" x2="717.50" y2="1096.00" stroke="#c8c8c8" stroke-width="1.20"/>
<line x1="775.00" y1="1085.00" x2="789.00" y2="1085.00" stroke="#3b3b3b" stroke-width="1.40"/>
<line x1="782.00" y1="1078.00" x2="782.00" y2="1092.00" stroke="#3b3b3b" stroke-width="1.40"/>
<circle cx="1157.50" cy="1079.50" r="1.40" fill="#3b3b3b"/>
<circle cx="1157.50" cy="1085.00" r="1.40" fill="#3b3b3b"/>
<circle cx="1157.50" cy="1090.50" r="1.40" fill="#3b3b3b"/>
<rect x="1180.00" y="1071.60" width="715.00" height="25.00" fill="#f5f5f5" rx="4.00"/>
<path d="M1195.4 1079 L1185.8 1084.5 L1195.4 1090 Z" fill="#6e6e6e"/>
<rect x="1202.40" y="1079.30" width="656.60" height="10.70" fill="#6e6e6e" rx="5.35"/>
<path d="M1879.4 1079 L1889 1084.5 L1879.4 1090 Z" fill="#6e6e6e"/>
<rect x="0.00" y="1106.00" width="1920.00" height="30.00" fill="#f4f4f4"/>
<line x1="0.00" y1="1106.50" x2="1920.00" y2="1106.50" stroke="#fbfbfb" stroke-width="2.00"/>
<text transform="translate(15.15 1127.30) scale(0.8465 1)" font-family="Liberation Sans" font-size="14.83" font-weight="400" fill="#3b3b3b">Ready</text>
<circle cx="86.60" cy="1115.30" r="2.10" fill="none" stroke="#2b2b2b" stroke-width="1.15"/>
<path d="M89.6 1120.8 L92.4 1119.7 C94.6 1118.9 94.4 1115.9 92.2 1116.5 L88.6 1117.6 L85 1117.7 L80.8 1116.4 C78.8 1116.9 79.2 1119.6 81.2 1119.5 L83.3 1119.9 C83.6 1122.5 82.9 1126 82.3 1128.5 C81.8 1130.8 84.4 1131.3 84.9 1129.3 L86.4 1124.3 L87.8 1127.2" fill="none" stroke="#2b2b2b" stroke-width="1.10" stroke-linejoin="round"/>
<path d="M88.6 1122.2 L96.8 1131 M96.7 1122.2 L88.3 1130.6" fill="none" stroke="#2b2b2b" stroke-width="1.10"/>
<text transform="translate(102.75 1127.60) scale(0.8987 1)" font-family="Liberation Sans" font-size="14.83" font-weight="700" fill="#1f1f1f">Accessibility: Investigate</text>
<path d="M1377 1114.5 H1395 V1126 M1377 1114.5 V1127 H1386" fill="none" stroke="#2b2b2b" stroke-width="1.20"/>
<circle cx="1388.50" cy="1126.50" r="3.20" fill="none" stroke="#2b2b2b" stroke-width="1.30"/>
<text transform="translate(1398.77 1127.40) scale(0.9265 1)" font-family="Liberation Sans" font-size="14.83" font-weight="400" fill="#2b2b2b">Display Settings</text>
<rect x="1523.00" y="1106.50" width="52.80" height="29.50" fill="#dcdcdc"/>
<rect x="1540.50" y="1113.00" width="16.50" height="16.50" fill="none" stroke="#2b2b2b" stroke-width="1.30"/>
<line x1="1546.00" y1="1113.00" x2="1546.00" y2="1129.50" stroke="#2b2b2b" stroke-width="1.10"/>
<line x1="1540.50" y1="1118.50" x2="1557.00" y2="1118.50" stroke="#2b2b2b" stroke-width="1.10"/>
<line x1="1551.50" y1="1113.00" x2="1551.50" y2="1129.50" stroke="#2b2b2b" stroke-width="1.10"/>
<line x1="1540.50" y1="1124.00" x2="1557.00" y2="1124.00" stroke="#2b2b2b" stroke-width="1.10"/>
<rect x="1593.50" y="1113.00" width="18.00" height="16.50" fill="none" stroke="#2b2b2b" stroke-width="1.30"/>
<rect x="1597.50" y="1116.50" width="10.00" height="9.50" fill="none" stroke="#2b2b2b" stroke-width="1.10"/>
<line x1="1599.00" y1="1119.00" x2="1606.00" y2="1119.00" stroke="#2b2b2b" stroke-width="0.90"/>
<line x1="1599.00" y1="1121.30" x2="1606.00" y2="1121.30" stroke="#2b2b2b" stroke-width="0.90"/>
<line x1="1599.00" y1="1123.60" x2="1606.00" y2="1123.60" stroke="#2b2b2b" stroke-width="0.90"/>
<rect x="1646.50" y="1113.00" width="18.00" height="16.50" fill="none" stroke="#2b2b2b" stroke-width="1.30"/>
<path d="M1651.5 1113 V1121 H1656 V1113" fill="none" stroke="#2b2b2b" stroke-width="1.20"/>
<line x1="1690.60" y1="1121.70" x2="1700.20" y2="1121.70" stroke="#5b5b5b" stroke-width="1.20"/>
<line x1="1708.70" y1="1121.70" x2="1839.70" y2="1121.70" stroke="#8a8a8a" stroke-width="1.20"/>
<line x1="1775.40" y1="1117.00" x2="1775.40" y2="1126.50" stroke="#5b5b5b" stroke-width="1.20"/>
<rect x="1782.00" y="1114.00" width="6.20" height="15.40" fill="#5b5b5b" rx="1.00"/>
<line x1="1848.60" y1="1121.70" x2="1857.50" y2="1121.70" stroke="#5b5b5b" stroke-width="1.20"/>
<line x1="1853.00" y1="1117.00" x2="1853.00" y2="1126.50" stroke="#5b5b5b" stroke-width="1.20"/>
<text transform="translate(1874.73 1127.40) scale(0.8716 1)" font-family="Liberation Sans" font-size="14.83" font-weight="400" fill="#2b2b2b">150%</text>
<rect x="595.00" y="364.00" width="960.20" height="581.00" fill="#ffffff" stroke="#6a6a6a" stroke-width="1.60"/>
<text transform="translate(996.02 419.70) scale(0.9792 1)" font-family="Liberation Sans" font-size="35.17" font-weight="400" fill="#595959">Chart Title</text>
<line x1="751.70" y1="853.30" x2="1525.40" y2="853.30" stroke="#d9d9d9" stroke-width="1.50"/>
<text transform="translate(717.40 861.30) scale(0.9500 1)" font-family="Liberation Sans" font-size="21.66" font-weight="400" fill="#595959">0</text>
<line x1="751.70" y1="809.93" x2="1525.40" y2="809.93" stroke="#d9d9d9" stroke-width="1.50"/>
<text transform="translate(683.10 817.93) scale(0.9500 1)" font-family="Liberation Sans" font-size="21.66" font-weight="400" fill="#595959">2000</text>
<line x1="751.70" y1="766.57" x2="1525.40" y2="766.57" stroke="#d9d9d9" stroke-width="1.50"/>
<text transform="translate(683.10 774.57) scale(0.9500 1)" font-family="Liberation Sans" font-size="21.66" font-weight="400" fill="#595959">4000</text>
<line x1="751.70" y1="723.20" x2="1525.40" y2="723.20" stroke="#d9d9d9" stroke-width="1.50"/>
<text transform="translate(683.10 731.20) scale(0.9500 1)" font-family="Liberation Sans" font-size="21.66" font-weight="400" fill="#595959">6000</text>
<line x1="751.70" y1="679.83" x2="1525.40" y2="679.83" stroke="#d9d9d9" stroke-width="1.50"/>
<text transform="translate(683.10 687.83) scale(0.9500 1)" font-family="Liberation Sans" font-size="21.66" font-weight="400" fill="#595959">8000</text>
<line x1="751.70" y1="636.47" x2="1525.40" y2="636.47" stroke="#d9d9d9" stroke-width="1.50"/>
<text transform="translate(671.67 644.47) scale(0.9500 1)" font-family="Liberation Sans" font-size="21.66" font-weight="400" fill="#595959">10000</text>
<line x1="751.70" y1="593.10" x2="1525.40" y2="593.10" stroke="#d9d9d9" stroke-width="1.50"/>
<text transform="translate(671.67 601.10) scale(0.9500 1)" font-family="Liberation Sans" font-size="21.66" font-weight="400" fill="#595959">12000</text>
<line x1="751.70" y1="549.73" x2="1525.40" y2="549.73" stroke="#d9d9d9" stroke-width="1.50"/>
<text transform="translate(671.67 557.73) scale(0.9500 1)" font-family="Liberation Sans" font-size="21.66" font-weight="400" fill="#595959">14000</text>
<line x1="751.70" y1="506.37" x2="1525.40" y2="506.37" stroke="#d9d9d9" stroke-width="1.50"/>
<text transform="translate(671.67 514.37) scale(0.9500 1)" font-family="Liberation Sans" font-size="21.66" font-weight="400" fill="#595959">16000</text>
<line x1="751.70" y1="463.00" x2="1525.40" y2="463.00" stroke="#d9d9d9" stroke-width="1.50"/>
<text transform="translate(671.67 471.00) scale(0.9500 1)" font-family="Liberation Sans" font-size="21.66" font-weight="400" fill="#595959">18000</text>
<text transform="translate(766.93 891.20)" font-family="Liberation Sans" font-size="21.80" font-weight="400" fill="#595959">Jan</text>
<text transform="translate(759.25 920.30)" font-family="Liberation Sans" font-size="21.80" font-weight="400" fill="#595959">2021</text>
<text transform="translate(829.19 891.20)" font-family="Liberation Sans" font-size="21.80" font-weight="400" fill="#595959">Feb</text>
<text transform="translate(823.73 920.30)" font-family="Liberation Sans" font-size="21.80" font-weight="400" fill="#595959">2021</text>
<text transform="translate(893.75 891.20)" font-family="Liberation Sans" font-size="21.80" font-weight="400" fill="#595959">Mar</text>
<text transform="translate(888.20 920.30)" font-family="Liberation Sans" font-size="21.80" font-weight="400" fill="#595959">2021</text>
<text transform="translate(960.53 891.20)" font-family="Liberation Sans" font-size="21.80" font-weight="400" fill="#595959">Apr</text>
<text transform="translate(952.68 920.30)" font-family="Liberation Sans" font-size="21.80" font-weight="400" fill="#595959">2021</text>
<text transform="translate(1020.70 891.20)" font-family="Liberation Sans" font-size="21.80" font-weight="400" fill="#595959">May</text>
<text transform="translate(1017.15 920.30)" font-family="Liberation Sans" font-size="21.80" font-weight="400" fill="#595959">2021</text>
<text transform="translate(1089.30 891.20)" font-family="Liberation Sans" font-size="21.80" font-weight="400" fill="#595959">Jun</text>
<text transform="translate(1081.63 920.30)" font-family="Liberation Sans" font-size="21.80" font-weight="400" fill="#595959">2021</text>
<text transform="translate(1157.28 891.20)" font-family="Liberation Sans" font-size="21.80" font-weight="400" fill="#595959">Jul</text>
<text transform="translate(1146.10 920.30)" font-family="Liberation Sans" font-size="21.80" font-weight="400" fill="#595959">2021</text>
<text transform="translate(1216.43 891.20)" font-family="Liberation Sans" font-size="21.80" font-weight="400" fill="#595959">Aug</text>
<text transform="translate(1210.58 920.30)" font-family="Liberation Sans" font-size="21.80" font-weight="400" fill="#595959">2021</text>
<text transform="translate(1280.41 891.20)" font-family="Liberation Sans" font-size="21.80" font-weight="400" fill="#595959">Sep</text>
<text transform="translate(1275.05 920.30)" font-family="Liberation Sans" font-size="21.80" font-weight="400" fill="#595959">2021</text>
<text transform="translate(1346.79 891.20)" font-family="Liberation Sans" font-size="21.80" font-weight="400" fill="#595959">Oct</text>
<text transform="translate(1339.53 920.30)" font-family="Liberation Sans" font-size="21.80" font-weight="400" fill="#595959">2021</text>
<text transform="translate(1408.76 891.20)" font-family="Liberation Sans" font-size="21.80" font-weight="400" fill="#595959">Nov</text>
<text transform="translate(1404.00 920.30)" font-family="Liberation Sans" font-size="21.80" font-weight="400" fill="#595959">2021</text>
<text transform="translate(1473.23 891.20)" font-family="Liberation Sans" font-size="21.80" font-weight="400" fill="#595959">Dec</text>
<text transform="translate(1468.48 920.30)" font-family="Liberation Sans" font-size="21.80" font-weight="400" fill="#595959">2021</text>
<g transform="translate(653.8 658) rotate(-90)">
<text transform="translate(-47.80 0.00) scale(0.9601 1)" font-family="Liberation Sans" font-size="25.00" font-weight="400" fill="#595959">Axis Title</text>
</g>
<path d="M783.94 701.52 L848.41 694.79 L912.89 688.07 L977.36 681.35 L1041.84 682.44 L1106.31 675.71 L1170.79 668.99 L1235.26 662.27 L1299.74 663.35 L1364.21 656.63 L1428.69 649.91 L1493.16 643.19" fill="none" stroke="#c0504d" stroke-width="5.20" stroke-linejoin="round"/>
<path d="M783.94 593.10 L848.41 582.91 L912.89 572.72 L977.36 562.53 L1041.84 552.34 L1106.31 555.15 L1170.79 544.96 L1235.26 534.77 L1299.74 524.58 L1364.21 514.39 L1428.69 517.21 L1493.16 507.02" fill="none" stroke="#4a7ebb" stroke-width="5.20" stroke-linejoin="round"/>
<path d="M777.24 586.60 H790.64 M777.24 599.80 H790.64 M777.24 586.60 V599.80 M790.64 586.60 V599.80" fill="none" stroke="#5a4a3a" stroke-width="0.90"/>
<circle cx="777.24" cy="586.60" r="2.70" fill="#cdeeff" stroke="#3c8dd6" stroke-width="1.10"/>
<circle cx="777.24" cy="599.80" r="2.70" fill="#cdeeff" stroke="#3c8dd6" stroke-width="1.10"/>
<circle cx="790.64" cy="586.60" r="2.70" fill="#cdeeff" stroke="#3c8dd6" stroke-width="1.10"/>
<circle cx="790.64" cy="599.80" r="2.70" fill="#cdeeff" stroke="#3c8dd6" stroke-width="1.10"/>
<path d="M841.71 576.41 H855.11 M841.71 589.61 H855.11 M841.71 576.41 V589.61 M855.11 576.41 V589.61" fill="none" stroke="#5a4a3a" stroke-width="0.90"/>
<circle cx="841.71" cy="576.41" r="2.70" fill="#cdeeff" stroke="#3c8dd6" stroke-width="1.10"/>
<circle cx="841.71" cy="589.61" r="2.70" fill="#cdeeff" stroke="#3c8dd6" stroke-width="1.10"/>
<circle cx="855.11" cy="576.41" r="2.70" fill="#cdeeff" stroke="#3c8dd6" stroke-width="1.10"/>
<circle cx="855.11" cy="589.61" r="2.70" fill="#cdeeff" stroke="#3c8dd6" stroke-width="1.10"/>
<path d="M906.19 566.22 H919.59 M906.19 579.42 H919.59 M906.19 566.22 V579.42 M919.59 566.22 V579.42" fill="none" stroke="#5a4a3a" stroke-width="0.90"/>
<circle cx="906.19" cy="566.22" r="2.70" fill="#cdeeff" stroke="#3c8dd6" stroke-width="1.10"/>
<circle cx="906.19" cy="579.42" r="2.70" fill="#cdeeff" stroke="#3c8dd6" stroke-width="1.10"/>
<circle cx="919.59" cy="566.22" r="2.70" fill="#cdeeff" stroke="#3c8dd6" stroke-width="1.10"/>
<circle cx="919.59" cy="579.42" r="2.70" fill="#cdeeff" stroke="#3c8dd6" stroke-width="1.10"/>
<path d="M970.66 556.03 H984.06 M970.66 569.23 H984.06 M970.66 556.03 V569.23 M984.06 556.03 V569.23" fill="none" stroke="#5a4a3a" stroke-width="0.90"/>
<circle cx="970.66" cy="556.03" r="2.70" fill="#cdeeff" stroke="#3c8dd6" stroke-width="1.10"/>
<circle cx="970.66" cy="569.23" r="2.70" fill="#cdeeff" stroke="#3c8dd6" stroke-width="1.10"/>
<circle cx="984.06" cy="556.03" r="2.70" fill="#cdeeff" stroke="#3c8dd6" stroke-width="1.10"/>
<circle cx="984.06" cy="569.23" r="2.70" fill="#cdeeff" stroke="#3c8dd6" stroke-width="1.10"/>
<path d="M1035.14 545.84 H1048.54 M1035.14 559.04 H1048.54 M1035.14 545.84 V559.04 M1048.54 545.84 V559.04" fill="none" stroke="#5a4a3a" stroke-width="0.90"/>
<circle cx="1035.14" cy="545.84" r="2.70" fill="#cdeeff" stroke="#3c8dd6" stroke-width="1.10"/>
<circle cx="1035.14" cy="559.04" r="2.70" fill="#cdeeff" stroke="#3c8dd6" stroke-width="1.10"/>
<circle cx="1048.54" cy="545.84" r="2.70" fill="#cdeeff" stroke="#3c8dd6" stroke-width="1.10"/>
<circle cx="1048.54" cy="559.04" r="2.70" fill="#cdeeff" stroke="#3c8dd6" stroke-width="1.10"/>
<path d="M1099.61 548.65 H1113.01 M1099.61 561.85 H1113.01 M1099.61 548.65 V561.85 M1113.01 548.65 V561.85" fill="none" stroke="#5a4a3a" stroke-width="0.90"/>
<circle cx="1099.61" cy="548.65" r="2.70" fill="#cdeeff" stroke="#3c8dd6" stroke-width="1.10"/>
<circle cx="1099.61" cy="561.85" r="2.70" fill="#cdeeff" stroke="#3c8dd6" stroke-width="1.10"/>
<circle cx="1113.01" cy="548.65" r="2.70" fill="#cdeeff" stroke="#3c8dd6" stroke-width="1.10"/>
<circle cx="1113.01" cy="561.85" r="2.70" fill="#cdeeff" stroke="#3c8dd6" stroke-width="1.10"/>
<path d="M1164.09 538.46 H1177.49 M1164.09 551.66 H1177.49 M1164.09 538.46 V551.66 M1177.49 538.46 V551.66" fill="none" stroke="#5a4a3a" stroke-width="0.90"/>
<circle cx="1164.09" cy="538.46" r="2.70" fill="#cdeeff" stroke="#3c8dd6" stroke-width="1.10"/>
<circle cx="1164.09" cy="551.66" r="2.70" fill="#cdeeff" stroke="#3c8dd6" stroke-width="1.10"/>
<circle cx="1177.49" cy="538.46" r="2.70" fill="#cdeeff" stroke="#3c8dd6" stroke-width="1.10"/>
<circle cx="1177.49" cy="551.66" r="2.70" fill="#cdeeff" stroke="#3c8dd6" stroke-width="1.10"/>
<path d="M1228.56 528.27 H1241.96 M1228.56 541.47 H1241.96 M1228.56 528.27 V541.47 M1241.96 528.27 V541.47" fill="none" stroke="#5a4a3a" stroke-width="0.90"/>
<circle cx="1228.56" cy="528.27" r="2.70" fill="#cdeeff" stroke="#3c8dd6" stroke-width="1.10"/>
<circle cx="1228.56" cy="541.47" r="2.70" fill="#cdeeff" stroke="#3c8dd6" stroke-width="1.10"/>
<circle cx="1241.96" cy="528.27" r="2.70" fill="#cdeeff" stroke="#3c8dd6" stroke-width="1.10"/>
<circle cx="1241.96" cy="541.47" r="2.70" fill="#cdeeff" stroke="#3c8dd6" stroke-width="1.10"/>
<path d="M1293.04 518.08 H1306.44 M1293.04 531.28 H1306.44 M1293.04 518.08 V531.28 M1306.44 518.08 V531.28" fill="none" stroke="#5a4a3a" stroke-width="0.90"/>
<circle cx="1293.04" cy="518.08" r="2.70" fill="#cdeeff" stroke="#3c8dd6" stroke-width="1.10"/>
<circle cx="1293.04" cy="531.28" r="2.70" fill="#cdeeff" stroke="#3c8dd6" stroke-width="1.10"/>
<circle cx="1306.44" cy="518.08" r="2.70" fill="#cdeeff" stroke="#3c8dd6" stroke-width="1.10"/>
<circle cx="1306.44" cy="531.28" r="2.70" fill="#cdeeff" stroke="#3c8dd6" stroke-width="1.10"/>
<path d="M1357.51 507.89 H1370.91 M1357.51 521.09 H1370.91 M1357.51 507.89 V521.09 M1370.91 507.89 V521.09" fill="none" stroke="#5a4a3a" stroke-width="0.90"/>
<circle cx="1357.51" cy="507.89" r="2.70" fill="#cdeeff" stroke="#3c8dd6" stroke-width="1.10"/>
<circle cx="1357.51" cy="521.09" r="2.70" fill="#cdeeff" stroke="#3c8dd6" stroke-width="1.10"/>
<circle cx="1370.91" cy="507.89" r="2.70" fill="#cdeeff" stroke="#3c8dd6" stroke-width="1.10"/>
<circle cx="1370.91" cy="521.09" r="2.70" fill="#cdeeff" stroke="#3c8dd6" stroke-width="1.10"/>
<path d="M1421.99 510.71 H1435.39 M1421.99 523.91 H1435.39 M1421.99 510.71 V523.91 M1435.39 510.71 V523.91" fill="none" stroke="#5a4a3a" stroke-width="0.90"/>
<circle cx="1421.99" cy="510.71" r="2.70" fill="#cdeeff" stroke="#3c8dd6" stroke-width="1.10"/>
<circle cx="1421.99" cy="523.91" r="2.70" fill="#cdeeff" stroke="#3c8dd6" stroke-width="1.10"/>
<circle cx="1435.39" cy="510.71" r="2.70" fill="#cdeeff" stroke="#3c8dd6" stroke-width="1.10"/>
<circle cx="1435.39" cy="523.91" r="2.70" fill="#cdeeff" stroke="#3c8dd6" stroke-width="1.10"/>
<path d="M1486.46 500.52 H1499.86 M1486.46 513.72 H1499.86 M1486.46 500.52 V513.72 M1499.86 500.52 V513.72" fill="none" stroke="#5a4a3a" stroke-width="0.90"/>
<circle cx="1486.46" cy="500.52" r="2.70" fill="#cdeeff" stroke="#3c8dd6" stroke-width="1.10"/>
<circle cx="1486.46" cy="513.72" r="2.70" fill="#cdeeff" stroke="#3c8dd6" stroke-width="1.10"/>
<circle cx="1499.86" cy="500.52" r="2.70" fill="#cdeeff" stroke="#3c8dd6" stroke-width="1.10"/>
<circle cx="1499.86" cy="513.72" r="2.70" fill="#cdeeff" stroke="#3c8dd6" stroke-width="1.10"/>
<text transform="translate(1425.90 514.20) scale(1.0577 1)" font-family="Liberation Sans" font-size="19.48" font-weight="400" fill="#404040">Sales, 15970</text>
<text transform="translate(1444.70 650.60) scale(1.0771 1)" font-family="Liberation Sans" font-size="19.48" font-weight="400" fill="#404040">Cost, 9690</text>
<circle cx="595.00" cy="364.00" r="6.30" fill="#ffffff" stroke="#575757" stroke-width="2.00"/>
<circle cx="1075.00" cy="364.00" r="6.30" fill="#ffffff" stroke="#575757" stroke-width="2.00"/>
<circle cx="1555.20" cy="364.00" r="6.30" fill="#ffffff" stroke="#575757" stroke-width="2.00"/>
<circle cx="595.00" cy="654.50" r="6.30" fill="#ffffff" stroke="#575757" stroke-width="2.00"/>
<circle cx="1555.20" cy="654.50" r="6.30" fill="#ffffff" stroke="#575757" stroke-width="2.00"/>
<circle cx="595.00" cy="945.00" r="6.30" fill="#ffffff" stroke="#575757" stroke-width="2.00"/>
<circle cx="1075.00" cy="945.00" r="6.30" fill="#ffffff" stroke="#575757" stroke-width="2.00"/>
<circle cx="1555.20" cy="945.00" r="6.30" fill="#ffffff" stroke="#575757" stroke-width="2.00"/>
<rect x="1571.30" y="364.00" width="36.30" height="36.60" fill="#ffffff" stroke="#5f5f5f" stroke-width="1.20"/>
<rect x="1571.30" y="415.00" width="36.30" height="36.60" fill="#ffffff" stroke="#5f5f5f" stroke-width="1.20"/>
<rect x="1571.30" y="465.70" width="36.30" height="36.60" fill="#ffffff" stroke="#5f5f5f" stroke-width="1.20"/>
<line x1="1576.50" y1="382.30" x2="1602.50" y2="382.30" stroke="#3aa845" stroke-width="1.40"/>
<line x1="1589.50" y1="369.00" x2="1589.50" y2="396.00" stroke="#3aa845" stroke-width="1.40"/>
<path d="M1603 421 C1604.5 420 1606 421.5 1605 423 L1591.5 438.5 L1589 436.5 Z" fill="#ffffff" stroke="#3b3b3b" stroke-width="1.10"/>
<path d="M1589 436.5 C1585.5 436 1583.5 438.5 1583 441 C1582.5 443 1580.5 444 1576.5 444.5 C1582 446.5 1589 445.5 1591.5 438.5 Z" fill="#4a90d9" stroke="#2a6ab0" stroke-width="0.90"/>
<path d="M1576 470.5 H1603 L1592.5 484.5 V497 H1586.5 V484.5 Z" fill="#ffffff" stroke="#3b3b3b" stroke-width="1.30" stroke-linejoin="round"/>
<defs><filter id="tblur" x="-2%" y="-2%" width="104%" height="104%"><feGaussianBlur stdDeviation="0.45"/></filter><linearGradient id="tg2" x1="0" y1="0" x2="0" y2="1"><stop offset="0" stop-color="#dadada"/><stop offset="0.35" stop-color="#f2f2f2"/><stop offset="1" stop-color="#c4c4c4"/></linearGradient><radialGradient id="tg6" cx="0.5" cy="0.35" r="0.75"><stop offset="0" stop-color="#474747"/><stop offset="1" stop-color="#232323"/></radialGradient><clipPath id="tclip"><rect x="273" y="120" width="942" height="80"/></clipPath></defs>
<g filter="url(#tblur)">
<rect x="280.30" y="128.00" width="107.00" height="64.00" fill="#ffffff" stroke="#e4e4e4" stroke-width="0.80"/>
<line x1="324.40" y1="133.50" x2="342.50" y2="133.50" stroke="#9a9a9a" stroke-width="1.40"/>
<line x1="293.00" y1="138.90" x2="383.70" y2="138.90" stroke="#ececec" stroke-width="0.80"/>
<line x1="293.00" y1="142.92" x2="383.70" y2="142.92" stroke="#ececec" stroke-width="0.80"/>
<line x1="293.00" y1="146.94" x2="383.70" y2="146.94" stroke="#ececec" stroke-width="0.80"/>
<line x1="293.00" y1="150.97" x2="383.70" y2="150.97" stroke="#ececec" stroke-width="0.80"/>
<line x1="293.00" y1="154.99" x2="383.70" y2="154.99" stroke="#ececec" stroke-width="0.80"/>
<line x1="293.00" y1="159.01" x2="383.70" y2="159.01" stroke="#ececec" stroke-width="0.80"/>
<line x1="293.00" y1="163.03" x2="383.70" y2="163.03" stroke="#ececec" stroke-width="0.80"/>
<line x1="293.00" y1="167.06" x2="383.70" y2="167.06" stroke="#ececec" stroke-width="0.80"/>
<line x1="293.00" y1="171.08" x2="383.70" y2="171.08" stroke="#ececec" stroke-width="0.80"/>
<line x1="293.00" y1="175.10" x2="383.70" y2="175.10" stroke="#ececec" stroke-width="0.80"/>
<line x1="282.50" y1="138.90" x2="290.00" y2="138.90" stroke="#c4c4c4" stroke-width="1.00"/>
<line x1="282.50" y1="142.92" x2="290.00" y2="142.92" stroke="#c4c4c4" stroke-width="1.00"/>
<line x1="282.50" y1="146.94" x2="290.00" y2="146.94" stroke="#c4c4c4" stroke-width="1.00"/>
<line x1="282.50" y1="150.97" x2="290.00" y2="150.97" stroke="#c4c4c4" stroke-width="1.00"/>
<line x1="282.50" y1="154.99" x2="290.00" y2="154.99" stroke="#c4c4c4" stroke-width="1.00"/>
<line x1="282.50" y1="159.01" x2="290.00" y2="159.01" stroke="#c4c4c4" stroke-width="1.00"/>
<line x1="282.50" y1="163.03" x2="290.00" y2="163.03" stroke="#c4c4c4" stroke-width="1.00"/>
<line x1="282.50" y1="167.06" x2="290.00" y2="167.06" stroke="#c4c4c4" stroke-width="1.00"/>
<line x1="282.50" y1="171.08" x2="290.00" y2="171.08" stroke="#c4c4c4" stroke-width="1.00"/>
<line x1="282.50" y1="175.10" x2="290.00" y2="175.10" stroke="#c4c4c4" stroke-width="1.00"/>
<line x1="292.80" y1="179.50" x2="297.20" y2="179.50" stroke="#cacaca" stroke-width="1.10"/>
<line x1="292.80" y1="182.30" x2="297.20" y2="182.30" stroke="#cacaca" stroke-width="1.10"/>
<line x1="300.62" y1="179.50" x2="305.02" y2="179.50" stroke="#cacaca" stroke-width="1.10"/>
<line x1="300.62" y1="182.30" x2="305.02" y2="182.30" stroke="#cacaca" stroke-width="1.10"/>
<line x1="308.44" y1="179.50" x2="312.84" y2="179.50" stroke="#cacaca" stroke-width="1.10"/>
<line x1="308.44" y1="182.30" x2="312.84" y2="182.30" stroke="#cacaca" stroke-width="1.10"/>
<line x1="316.25" y1="179.50" x2="320.65" y2="179.50" stroke="#cacaca" stroke-width="1.10"/>
<line x1="316.25" y1="182.30" x2="320.65" y2="182.30" stroke="#cacaca" stroke-width="1.10"/>
<line x1="324.07" y1="179.50" x2="328.47" y2="179.50" stroke="#cacaca" stroke-width="1.10"/>
<line x1="324.07" y1="182.30" x2="328.47" y2="182.30" stroke="#cacaca" stroke-width="1.10"/>
<line x1="331.89" y1="179.50" x2="336.29" y2="179.50" stroke="#cacaca" stroke-width="1.10"/>
<line x1="331.89" y1="182.30" x2="336.29" y2="182.30" stroke="#cacaca" stroke-width="1.10"/>
<line x1="339.71" y1="179.50" x2="344.11" y2="179.50" stroke="#cacaca" stroke-width="1.10"/>
<line x1="339.71" y1="182.30" x2="344.11" y2="182.30" stroke="#cacaca" stroke-width="1.10"/>
<line x1="347.53" y1="179.50" x2="351.93" y2="179.50" stroke="#cacaca" stroke-width="1.10"/>
<line x1="347.53" y1="182.30" x2="351.93" y2="182.30" stroke="#cacaca" stroke-width="1.10"/>
<line x1="355.35" y1="179.50" x2="359.75" y2="179.50" stroke="#cacaca" stroke-width="1.10"/>
<line x1="355.35" y1="182.30" x2="359.75" y2="182.30" stroke="#cacaca" stroke-width="1.10"/>
<line x1="363.16" y1="179.50" x2="367.56" y2="179.50" stroke="#cacaca" stroke-width="1.10"/>
<line x1="363.16" y1="182.30" x2="367.56" y2="182.30" stroke="#cacaca" stroke-width="1.10"/>
<line x1="370.98" y1="179.50" x2="375.38" y2="179.50" stroke="#cacaca" stroke-width="1.10"/>
<line x1="370.98" y1="182.30" x2="375.38" y2="182.30" stroke="#cacaca" stroke-width="1.10"/>
<line x1="378.80" y1="179.50" x2="383.20" y2="179.50" stroke="#cacaca" stroke-width="1.10"/>
<line x1="378.80" y1="182.30" x2="383.20" y2="182.30" stroke="#cacaca" stroke-width="1.10"/>
<path d="M295.00 150.97 L302.84 150.02 L310.67 149.08 L318.51 148.13 L326.35 147.19 L334.18 147.45 L342.02 146.50 L349.85 145.56 L357.69 144.61 L365.53 143.67 L373.36 143.93 L381.20 142.98" fill="none" stroke="#5d8fd0" stroke-width="2.20" stroke-linejoin="round"/>
<path d="M295.00 161.02 L302.84 160.40 L310.67 159.78 L318.51 159.15 L326.35 159.25 L334.18 158.63 L342.02 158.01 L349.85 157.38 L357.69 157.48 L365.53 156.86 L373.36 156.24 L381.20 155.61" fill="none" stroke="#d0605a" stroke-width="2.20" stroke-linejoin="round"/>
<line x1="320.60" y1="187.30" x2="330.60" y2="187.30" stroke="#6a98d4" stroke-width="1.30"/>
<line x1="335.60" y1="187.30" x2="346.60" y2="187.30" stroke="#d47070" stroke-width="1.30"/>
<rect x="397.60" y="128.00" width="107.00" height="64.00" fill="url(#tg2)"/>
<line x1="439.40" y1="134.00" x2="461.90" y2="134.00" stroke="#333333" stroke-width="2.00"/>
<line x1="401.00" y1="167.00" x2="501.00" y2="167.00" stroke="#a8a8a8" stroke-width="1.50"/>
<line x1="401.00" y1="171.00" x2="501.00" y2="171.00" stroke="#909090" stroke-width="1.50"/>
<line x1="401.00" y1="175.00" x2="501.00" y2="175.00" stroke="#5a5a5a" stroke-width="1.50"/>
<line x1="402.80" y1="179.50" x2="407.20" y2="179.50" stroke="#8a8a8a" stroke-width="1.10"/>
<line x1="402.80" y1="182.30" x2="407.20" y2="182.30" stroke="#8a8a8a" stroke-width="1.10"/>
<line x1="411.25" y1="179.50" x2="415.65" y2="179.50" stroke="#8a8a8a" stroke-width="1.10"/>
<line x1="411.25" y1="182.30" x2="415.65" y2="182.30" stroke="#8a8a8a" stroke-width="1.10"/>
<line x1="419.71" y1="179.50" x2="424.11" y2="179.50" stroke="#8a8a8a" stroke-width="1.10"/>
<line x1="419.71" y1="182.30" x2="424.11" y2="182.30" stroke="#8a8a8a" stroke-width="1.10"/>
<line x1="428.16" y1="179.50" x2="432.56" y2="179.50" stroke="#8a8a8a" stroke-width="1.10"/>
<line x1="428.16" y1="182.30" x2="432.56" y2="182.30" stroke="#8a8a8a" stroke-width="1.10"/>
<line x1="436.62" y1="179.50" x2="441.02" y2="179.50" stroke="#8a8a8a" stroke-width="1.10"/>
<line x1="436.62" y1="182.30" x2="441.02" y2="182.30" stroke="#8a8a8a" stroke-width="1.10"/>
<line x1="445.07" y1="179.50" x2="449.47" y2="179.50" stroke="#8a8a8a" stroke-width="1.10"/>
<line x1="445.07" y1="182.30" x2="449.47" y2="182.30" stroke="#8a8a8a" stroke-width="1.10"/>
<line x1="453.53" y1="179.50" x2="457.93" y2="179.50" stroke="#8a8a8a" stroke-width="1.10"/>
<line x1="453.53" y1="182.30" x2="457.93" y2="182.30" stroke="#8a8a8a" stroke-width="1.10"/>
<line x1="461.98" y1="179.50" x2="466.38" y2="179.50" stroke="#8a8a8a" stroke-width="1.10"/>
<line x1="461.98" y1="182.30" x2="466.38" y2="182.30" stroke="#8a8a8a" stroke-width="1.10"/>
<line x1="470.44" y1="179.50" x2="474.84" y2="179.50" stroke="#8a8a8a" stroke-width="1.10"/>
<line x1="470.44" y1="182.30" x2="474.84" y2="182.30" stroke="#8a8a8a" stroke-width="1.10"/>
<line x1="478.89" y1="179.50" x2="483.29" y2="179.50" stroke="#8a8a8a" stroke-width="1.10"/>
<line x1="478.89" y1="182.30" x2="483.29" y2="182.30" stroke="#8a8a8a" stroke-width="1.10"/>
<line x1="487.35" y1="179.50" x2="491.75" y2="179.50" stroke="#8a8a8a" stroke-width="1.10"/>
<line x1="487.35" y1="182.30" x2="491.75" y2="182.30" stroke="#8a8a8a" stroke-width="1.10"/>
<line x1="495.80" y1="179.50" x2="500.20" y2="179.50" stroke="#8a8a8a" stroke-width="1.10"/>
<line x1="495.80" y1="182.30" x2="500.20" y2="182.30" stroke="#8a8a8a" stroke-width="1.10"/>
<path d="M405.00 150.47 L413.45 151.52 L421.91 148.58 L430.36 149.63 L438.82 146.69 L447.27 148.95 L455.73 146.00 L464.18 147.06 L472.64 144.11 L481.09 145.17 L489.55 143.43 L498.00 144.48" fill="none" stroke="#5d8fd0" stroke-width="1.80" stroke-linejoin="round"/>
<path d="M405.00 160.22 L413.45 161.60 L421.91 158.98 L430.36 160.35 L438.82 158.45 L447.27 159.83 L455.73 157.21 L464.18 158.58 L472.64 156.68 L481.09 158.06 L489.55 155.44 L498.00 156.81" fill="none" stroke="#d0605a" stroke-width="1.80" stroke-linejoin="round"/>
<circle cx="405.00" cy="150.47" r="1.60" fill="#9cc0ec" stroke="#4a7ac0" stroke-width="0.70"/>
<circle cx="413.45" cy="151.52" r="1.60" fill="#9cc0ec" stroke="#4a7ac0" stroke-width="0.70"/>
<circle cx="421.91" cy="148.58" r="1.60" fill="#9cc0ec" stroke="#4a7ac0" stroke-width="0.70"/>
<circle cx="430.36" cy="149.63" r="1.60" fill="#9cc0ec" stroke="#4a7ac0" stroke-width="0.70"/>
<circle cx="438.82" cy="146.69" r="1.60" fill="#9cc0ec" stroke="#4a7ac0" stroke-width="0.70"/>
<circle cx="447.27" cy="148.95" r="1.60" fill="#9cc0ec" stroke="#4a7ac0" stroke-width="0.70"/>
<circle cx="455.73" cy="146.00" r="1.60" fill="#9cc0ec" stroke="#4a7ac0" stroke-width="0.70"/>
<circle cx="464.18" cy="147.06" r="1.60" fill="#9cc0ec" stroke="#4a7ac0" stroke-width="0.70"/>
<circle cx="472.64" cy="144.11" r="1.60" fill="#9cc0ec" stroke="#4a7ac0" stroke-width="0.70"/>
<circle cx="481.09" cy="145.17" r="1.60" fill="#9cc0ec" stroke="#4a7ac0" stroke-width="0.70"/>
<circle cx="489.55" cy="143.43" r="1.60" fill="#9cc0ec" stroke="#4a7ac0" stroke-width="0.70"/>
<circle cx="498.00" cy="144.48" r="1.60" fill="#9cc0ec" stroke="#4a7ac0" stroke-width="0.70"/>
<circle cx="405.00" cy="160.22" r="1.60" fill="#eaa0a0" stroke="#c05050" stroke-width="0.70"/>
<circle cx="413.45" cy="161.60" r="1.60" fill="#eaa0a0" stroke="#c05050" stroke-width="0.70"/>
<circle cx="421.91" cy="158.98" r="1.60" fill="#eaa0a0" stroke="#c05050" stroke-width="0.70"/>
<circle cx="430.36" cy="160.35" r="1.60" fill="#eaa0a0" stroke="#c05050" stroke-width="0.70"/>
<circle cx="438.82" cy="158.45" r="1.60" fill="#eaa0a0" stroke="#c05050" stroke-width="0.70"/>
<circle cx="447.27" cy="159.83" r="1.60" fill="#eaa0a0" stroke="#c05050" stroke-width="0.70"/>
<circle cx="455.73" cy="157.21" r="1.60" fill="#eaa0a0" stroke="#c05050" stroke-width="0.70"/>
<circle cx="464.18" cy="158.58" r="1.60" fill="#eaa0a0" stroke="#c05050" stroke-width="0.70"/>
<circle cx="472.64" cy="156.68" r="1.60" fill="#eaa0a0" stroke="#c05050" stroke-width="0.70"/>
<circle cx="481.09" cy="158.06" r="1.60" fill="#eaa0a0" stroke="#c05050" stroke-width="0.70"/>
<circle cx="489.55" cy="155.44" r="1.60" fill="#eaa0a0" stroke="#c05050" stroke-width="0.70"/>
<circle cx="498.00" cy="156.81" r="1.60" fill="#eaa0a0" stroke="#c05050" stroke-width="0.70"/>
<line x1="438.50" y1="187.30" x2="448.50" y2="187.30" stroke="#6a98d4" stroke-width="1.30"/>
<line x1="453.50" y1="187.30" x2="464.50" y2="187.30" stroke="#d47070" stroke-width="1.30"/>
<rect x="514.90" y="128.00" width="107.00" height="64.00" fill="#ffffff" stroke="#e4e4e4" stroke-width="0.80"/>
<line x1="558.00" y1="133.50" x2="576.00" y2="133.50" stroke="#a8a8a8" stroke-width="1.40"/>
<line x1="527.60" y1="138.90" x2="618.00" y2="138.90" stroke="#ececec" stroke-width="0.80"/>
<line x1="527.60" y1="142.92" x2="618.00" y2="142.92" stroke="#ececec" stroke-width="0.80"/>
<line x1="527.60" y1="146.94" x2="618.00" y2="146.94" stroke="#ececec" stroke-width="0.80"/>
<line x1="527.60" y1="150.97" x2="618.00" y2="150.97" stroke="#ececec" stroke-width="0.80"/>
<line x1="527.60" y1="154.99" x2="618.00" y2="154.99" stroke="#ececec" stroke-width="0.80"/>
<line x1="527.60" y1="159.01" x2="618.00" y2="159.01" stroke="#ececec" stroke-width="0.80"/>
<line x1="527.60" y1="163.03" x2="618.00" y2="163.03" stroke="#ececec" stroke-width="0.80"/>
<line x1="527.60" y1="167.06" x2="618.00" y2="167.06" stroke="#ececec" stroke-width="0.80"/>
<line x1="527.60" y1="171.08" x2="618.00" y2="171.08" stroke="#ececec" stroke-width="0.80"/>
<line x1="527.60" y1="175.10" x2="618.00" y2="175.10" stroke="#ececec" stroke-width="0.80"/>
<line x1="526.00" y1="138.90" x2="526.00" y2="175.10" stroke="#e6e6e6" stroke-width="0.80"/>
<line x1="533.67" y1="138.90" x2="533.67" y2="175.10" stroke="#e6e6e6" stroke-width="0.80"/>
<line x1="541.33" y1="138.90" x2="541.33" y2="175.10" stroke="#e6e6e6" stroke-width="0.80"/>
<line x1="549.00" y1="138.90" x2="549.00" y2="175.10" stroke="#e6e6e6" stroke-width="0.80"/>
<line x1="556.67" y1="138.90" x2="556.67" y2="175.10" stroke="#e6e6e6" stroke-width="0.80"/>
<line x1="564.33" y1="138.90" x2="564.33" y2="175.10" stroke="#e6e6e6" stroke-width="0.80"/>
<line x1="572.00" y1="138.90" x2="572.00" y2="175.10" stroke="#e6e6e6" stroke-width="0.80"/>
<line x1="579.67" y1="138.90" x2="579.67" y2="175.10" stroke="#e6e6e6" stroke-width="0.80"/>
<line x1="587.33" y1="138.90" x2="587.33" y2="175.10" stroke="#e6e6e6" stroke-width="0.80"/>
<line x1="595.00" y1="138.90" x2="595.00" y2="175.10" stroke="#e6e6e6" stroke-width="0.80"/>
<line x1="602.67" y1="138.90" x2="602.67" y2="175.10" stroke="#e6e6e6" stroke-width="0.80"/>
<line x1="610.33" y1="138.90" x2="610.33" y2="175.10" stroke="#e6e6e6" stroke-width="0.80"/>
<line x1="618.00" y1="138.90" x2="618.00" y2="175.10" stroke="#e6e6e6" stroke-width="0.80"/>
<line x1="517.00" y1="138.90" x2="524.50" y2="138.90" stroke="#c4c4c4" stroke-width="1.00"/>
<line x1="517.00" y1="142.92" x2="524.50" y2="142.92" stroke="#c4c4c4" stroke-width="1.00"/>
<line x1="517.00" y1="146.94" x2="524.50" y2="146.94" stroke="#c4c4c4" stroke-width="1.00"/>
<line x1="517.00" y1="150.97" x2="524.50" y2="150.97" stroke="#c4c4c4" stroke-width="1.00"/>
<line x1="517.00" y1="154.99" x2="524.50" y2="154.99" stroke="#c4c4c4" stroke-width="1.00"/>
<line x1="517.00" y1="159.01" x2="524.50" y2="159.01" stroke="#c4c4c4" stroke-width="1.00"/>
<line x1="517.00" y1="163.03" x2="524.50" y2="163.03" stroke="#c4c4c4" stroke-width="1.00"/>
<line x1="517.00" y1="167.06" x2="524.50" y2="167.06" stroke="#c4c4c4" stroke-width="1.00"/>
<line x1="517.00" y1="171.08" x2="524.50" y2="171.08" stroke="#c4c4c4" stroke-width="1.00"/>
<line x1="517.00" y1="175.10" x2="524.50" y2="175.10" stroke="#c4c4c4" stroke-width="1.00"/>
<line x1="527.30" y1="179.50" x2="531.70" y2="179.50" stroke="#cacaca" stroke-width="1.10"/>
<line x1="527.30" y1="182.30" x2="531.70" y2="182.30" stroke="#cacaca" stroke-width="1.10"/>
<line x1="535.12" y1="179.50" x2="539.52" y2="179.50" stroke="#cacaca" stroke-width="1.10"/>
<line x1="535.12" y1="182.30" x2="539.52" y2="182.30" stroke="#cacaca" stroke-width="1.10"/>
<line x1="542.94" y1="179.50" x2="547.34" y2="179.50" stroke="#cacaca" stroke-width="1.10"/>
<line x1="542.94" y1="182.30" x2="547.34" y2="182.30" stroke="#cacaca" stroke-width="1.10"/>
<line x1="550.75" y1="179.50" x2="555.15" y2="179.50" stroke="#cacaca" stroke-width="1.10"/>
<line x1="550.75" y1="182.30" x2="555.15" y2="182.30" stroke="#cacaca" stroke-width="1.10"/>
<line x1="558.57" y1="179.50" x2="562.97" y2="179.50" stroke="#cacaca" stroke-width="1.10"/>
<line x1="558.57" y1="182.30" x2="562.97" y2="182.30" stroke="#cacaca" stroke-width="1.10"/>
<line x1="566.39" y1="179.50" x2="570.79" y2="179.50" stroke="#cacaca" stroke-width="1.10"/>
<line x1="566.39" y1="182.30" x2="570.79" y2="182.30" stroke="#cacaca" stroke-width="1.10"/>
<line x1="574.21" y1="179.50" x2="578.61" y2="179.50" stroke="#cacaca" stroke-width="1.10"/>
<line x1="574.21" y1="182.30" x2="578.61" y2="182.30" stroke="#cacaca" stroke-width="1.10"/>
<line x1="582.03" y1="179.50" x2="586.43" y2="179.50" stroke="#cacaca" stroke-width="1.10"/>
<line x1="582.03" y1="182.30" x2="586.43" y2="182.30" stroke="#cacaca" stroke-width="1.10"/>
<line x1="589.85" y1="179.50" x2="594.25" y2="179.50" stroke="#cacaca" stroke-width="1.10"/>
<line x1="589.85" y1="182.30" x2="594.25" y2="182.30" stroke="#cacaca" stroke-width="1.10"/>
<line x1="597.66" y1="179.50" x2="602.06" y2="179.50" stroke="#cacaca" stroke-width="1.10"/>
<line x1="597.66" y1="182.30" x2="602.06" y2="182.30" stroke="#cacaca" stroke-width="1.10"/>
<line x1="605.48" y1="179.50" x2="609.88" y2="179.50" stroke="#cacaca" stroke-width="1.10"/>
<line x1="605.48" y1="182.30" x2="609.88" y2="182.30" stroke="#cacaca" stroke-width="1.10"/>
<line x1="613.30" y1="179.50" x2="617.70" y2="179.50" stroke="#cacaca" stroke-width="1.10"/>
<line x1="613.30" y1="182.30" x2="617.70" y2="182.30" stroke="#cacaca" stroke-width="1.10"/>
<path d="M529.50 150.97 L537.35 150.02 L545.19 149.08 L553.04 148.13 L560.88 147.19 L568.73 147.45 L576.57 146.50 L584.42 145.56 L592.26 144.61 L600.11 143.67 L607.95 143.93 L615.80 142.98" fill="none" stroke="#5d8fd0" stroke-width="2.00" stroke-linejoin="round"/>
<path d="M529.50 161.02 L537.35 160.40 L545.19 159.78 L553.04 159.15 L560.88 159.25 L568.73 158.63 L576.57 158.01 L584.42 157.38 L592.26 157.48 L600.11 156.86 L607.95 156.24 L615.80 155.61" fill="none" stroke="#d0605a" stroke-width="2.00" stroke-linejoin="round"/>
<line x1="555.20" y1="187.30" x2="565.20" y2="187.30" stroke="#6a98d4" stroke-width="1.30"/>
<line x1="570.20" y1="187.30" x2="581.20" y2="187.30" stroke="#d47070" stroke-width="1.30"/>
<rect x="632.20" y="128.00" width="107.00" height="64.00" fill="#ffffff" stroke="#e4e4e4" stroke-width="0.80"/>
<line x1="675.00" y1="133.00" x2="695.00" y2="133.00" stroke="#3a5a9a" stroke-width="2.00"/>
<line x1="645.00" y1="138.90" x2="735.50" y2="138.90" stroke="#ebebeb" stroke-width="0.80"/>
<line x1="645.00" y1="142.92" x2="735.50" y2="142.92" stroke="#ebebeb" stroke-width="0.80"/>
<line x1="645.00" y1="146.94" x2="735.50" y2="146.94" stroke="#ebebeb" stroke-width="0.80"/>
<line x1="645.00" y1="150.97" x2="735.50" y2="150.97" stroke="#ebebeb" stroke-width="0.80"/>
<line x1="645.00" y1="154.99" x2="735.50" y2="154.99" stroke="#ebebeb" stroke-width="0.80"/>
<line x1="645.00" y1="159.01" x2="735.50" y2="159.01" stroke="#ebebeb" stroke-width="0.80"/>
<line x1="645.00" y1="163.03" x2="735.50" y2="163.03" stroke="#ebebeb" stroke-width="0.80"/>
<line x1="645.00" y1="167.06" x2="735.50" y2="167.06" stroke="#ebebeb" stroke-width="0.80"/>
<line x1="645.00" y1="171.08" x2="735.50" y2="171.08" stroke="#ebebeb" stroke-width="0.80"/>
<line x1="645.00" y1="175.10" x2="735.50" y2="175.10" stroke="#ebebeb" stroke-width="0.80"/>
<line x1="634.50" y1="138.90" x2="642.00" y2="138.90" stroke="#c0c0c0" stroke-width="1.00"/>
<line x1="634.50" y1="142.92" x2="642.00" y2="142.92" stroke="#c0c0c0" stroke-width="1.00"/>
<line x1="634.50" y1="146.94" x2="642.00" y2="146.94" stroke="#c0c0c0" stroke-width="1.00"/>
<line x1="634.50" y1="150.97" x2="642.00" y2="150.97" stroke="#c0c0c0" stroke-width="1.00"/>
<line x1="634.50" y1="154.99" x2="642.00" y2="154.99" stroke="#c0c0c0" stroke-width="1.00"/>
<line x1="634.50" y1="159.01" x2="642.00" y2="159.01" stroke="#c0c0c0" stroke-width="1.00"/>
<line x1="634.50" y1="163.03" x2="642.00" y2="163.03" stroke="#c0c0c0" stroke-width="1.00"/>
<line x1="634.50" y1="167.06" x2="642.00" y2="167.06" stroke="#c0c0c0" stroke-width="1.00"/>
<line x1="634.50" y1="171.08" x2="642.00" y2="171.08" stroke="#c0c0c0" stroke-width="1.00"/>
<line x1="634.50" y1="175.10" x2="642.00" y2="175.10" stroke="#c0c0c0" stroke-width="1.00"/>
<line x1="644.80" y1="179.50" x2="649.20" y2="179.50" stroke="#c4c4c4" stroke-width="1.10"/>
<line x1="644.80" y1="182.30" x2="649.20" y2="182.30" stroke="#c4c4c4" stroke-width="1.10"/>
<line x1="652.62" y1="179.50" x2="657.02" y2="179.50" stroke="#c4c4c4" stroke-width="1.10"/>
<line x1="652.62" y1="182.30" x2="657.02" y2="182.30" stroke="#c4c4c4" stroke-width="1.10"/>
<line x1="660.44" y1="179.50" x2="664.84" y2="179.50" stroke="#c4c4c4" stroke-width="1.10"/>
<line x1="660.44" y1="182.30" x2="664.84" y2="182.30" stroke="#c4c4c4" stroke-width="1.10"/>
<line x1="668.25" y1="179.50" x2="672.65" y2="179.50" stroke="#c4c4c4" stroke-width="1.10"/>
<line x1="668.25" y1="182.30" x2="672.65" y2="182.30" stroke="#c4c4c4" stroke-width="1.10"/>
<line x1="676.07" y1="179.50" x2="680.47" y2="179.50" stroke="#c4c4c4" stroke-width="1.10"/>
<line x1="676.07" y1="182.30" x2="680.47" y2="182.30" stroke="#c4c4c4" stroke-width="1.10"/>
<line x1="683.89" y1="179.50" x2="688.29" y2="179.50" stroke="#c4c4c4" stroke-width="1.10"/>
<line x1="683.89" y1="182.30" x2="688.29" y2="182.30" stroke="#c4c4c4" stroke-width="1.10"/>
<line x1="691.71" y1="179.50" x2="696.11" y2="179.50" stroke="#c4c4c4" stroke-width="1.10"/>
<line x1="691.71" y1="182.30" x2="696.11" y2="182.30" stroke="#c4c4c4" stroke-width="1.10"/>
<line x1="699.53" y1="179.50" x2="703.93" y2="179.50" stroke="#c4c4c4" stroke-width="1.10"/>
<line x1="699.53" y1="182.30" x2="703.93" y2="182.30" stroke="#c4c4c4" stroke-width="1.10"/>
<line x1="707.35" y1="179.50" x2="711.75" y2="179.50" stroke="#c4c4c4" stroke-width="1.10"/>
<line x1="707.35" y1="182.30" x2="711.75" y2="182.30" stroke="#c4c4c4" stroke-width="1.10"/>
<line x1="715.16" y1="179.50" x2="719.56" y2="179.50" stroke="#c4c4c4" stroke-width="1.10"/>
<line x1="715.16" y1="182.30" x2="719.56" y2="182.30" stroke="#c4c4c4" stroke-width="1.10"/>
<line x1="722.98" y1="179.50" x2="727.38" y2="179.50" stroke="#c4c4c4" stroke-width="1.10"/>
<line x1="722.98" y1="182.30" x2="727.38" y2="182.30" stroke="#c4c4c4" stroke-width="1.10"/>
<line x1="730.80" y1="179.50" x2="735.20" y2="179.50" stroke="#c4c4c4" stroke-width="1.10"/>
<line x1="730.80" y1="182.30" x2="735.20" y2="182.30" stroke="#c4c4c4" stroke-width="1.10"/>
<path d="M647.00 150.97 L654.84 150.02 L662.67 149.08 L670.51 148.13 L678.35 147.19 L686.18 147.45 L694.02 146.50 L701.85 145.56 L709.69 144.61 L717.53 143.67 L725.36 143.93 L733.20 142.98" fill="none" stroke="#5d8fd0" stroke-width="2.60" stroke-linejoin="round"/>
<path d="M647.00 161.02 L654.84 160.40 L662.67 159.78 L670.51 159.15 L678.35 159.25 L686.18 158.63 L694.02 158.01 L701.85 157.38 L709.69 157.48 L717.53 156.86 L725.36 156.24 L733.20 155.61" fill="none" stroke="#d0605a" stroke-width="2.60" stroke-linejoin="round"/>
<line x1="672.50" y1="187.30" x2="682.50" y2="187.30" stroke="#6a98d4" stroke-width="1.30"/>
<line x1="687.50" y1="187.30" x2="698.50" y2="187.30" stroke="#d47070" stroke-width="1.30"/>
<rect x="749.50" y="128.00" width="107.00" height="64.00" fill="#ffffff" stroke="#e4e4e4" stroke-width="0.80"/>
<line x1="791.90" y1="133.20" x2="815.00" y2="133.20" stroke="#444444" stroke-width="2.00"/>
<clipPath id="hc5"><rect x="761" y="137" width="92" height="40"/></clipPath>
<g clip-path="url(#hc5)">
<line x1="713.00" y1="177.00" x2="753.00" y2="137.00" stroke="#e8e8e8" stroke-width="0.80"/>
<line x1="713.00" y1="137.00" x2="753.00" y2="177.00" stroke="#efefef" stroke-width="0.80"/>
<line x1="721.00" y1="177.00" x2="761.00" y2="137.00" stroke="#e8e8e8" stroke-width="0.80"/>
<line x1="721.00" y1="137.00" x2="761.00" y2="177.00" stroke="#efefef" stroke-width="0.80"/>
<line x1="729.00" y1="177.00" x2="769.00" y2="137.00" stroke="#e8e8e8" stroke-width="0.80"/>
<line x1="729.00" y1="137.00" x2="769.00" y2="177.00" stroke="#efefef" stroke-width="0.80"/>
<line x1="737.00" y1="177.00" x2="777.00" y2="137.00" stroke="#e8e8e8" stroke-width="0.80"/>
<line x1="737.00" y1="137.00" x2="777.00" y2="177.00" stroke="#efefef" stroke-width="0.80"/>
<line x1="745.00" y1="177.00" x2="785.00" y2="137.00" stroke="#e8e8e8" stroke-width="0.80"/>
<line x1="745.00" y1="137.00" x2="785.00" y2="177.00" stroke="#efefef" stroke-width="0.80"/>
<line x1="753.00" y1="177.00" x2="793.00" y2="137.00" stroke="#e8e8e8" stroke-width="0.80"/>
<line x1="753.00" y1="137.00" x2="793.00" y2="177.00" stroke="#efefef" stroke-width="0.80"/>
<line x1="761.00" y1="177.00" x2="801.00" y2="137.00" stroke="#e8e8e8" stroke-width="0.80"/>
<line x1="761.00" y1="137.00" x2="801.00" y2="177.00" stroke="#efefef" stroke-width="0.80"/>
<line x1="769.00" y1="177.00" x2="809.00" y2="137.00" stroke="#e8e8e8" stroke-width="0.80"/>
<line x1="769.00" y1="137.00" x2="809.00" y2="177.00" stroke="#efefef" stroke-width="0.80"/>
<line x1="777.00" y1="177.00" x2="817.00" y2="137.00" stroke="#e8e8e8" stroke-width="0.80"/>
<line x1="777.00" y1="137.00" x2="817.00" y2="177.00" stroke="#efefef" stroke-width="0.80"/>
<line x1="785.00" y1="177.00" x2="825.00" y2="137.00" stroke="#e8e8e8" stroke-width="0.80"/>
<line x1="785.00" y1="137.00" x2="825.00" y2="177.00" stroke="#efefef" stroke-width="0.80"/>
<line x1="793.00" y1="177.00" x2="833.00" y2="137.00" stroke="#e8e8e8" stroke-width="0.80"/>
<line x1="793.00" y1="137.00" x2="833.00" y2="177.00" stroke="#efefef" stroke-width="0.80"/>
<line x1="801.00" y1="177.00" x2="841.00" y2="137.00" stroke="#e8e8e8" stroke-width="0.80"/>
<line x1="801.00" y1="137.00" x2="841.00" y2="177.00" stroke="#efefef" stroke-width="0.80"/>
<line x1="809.00" y1="177.00" x2="849.00" y2="137.00" stroke="#e8e8e8" stroke-width="0.80"/>
<line x1="809.00" y1="137.00" x2="849.00" y2="177.00" stroke="#efefef" stroke-width="0.80"/>
<line x1="817.00" y1="177.00" x2="857.00" y2="137.00" stroke="#e8e8e8" stroke-width="0.80"/>
<line x1="817.00" y1="137.00" x2="857.00" y2="177.00" stroke="#efefef" stroke-width="0.80"/>
<line x1="825.00" y1="177.00" x2="865.00" y2="137.00" stroke="#e8e8e8" stroke-width="0.80"/>
<line x1="825.00" y1="137.00" x2="865.00" y2="177.00" stroke="#efefef" stroke-width="0.80"/>
<line x1="833.00" y1="177.00" x2="873.00" y2="137.00" stroke="#e8e8e8" stroke-width="0.80"/>
<line x1="833.00" y1="137.00" x2="873.00" y2="177.00" stroke="#efefef" stroke-width="0.80"/>
<line x1="841.00" y1="177.00" x2="881.00" y2="137.00" stroke="#e8e8e8" stroke-width="0.80"/>
<line x1="841.00" y1="137.00" x2="881.00" y2="177.00" stroke="#efefef" stroke-width="0.80"/>
<line x1="849.00" y1="177.00" x2="889.00" y2="137.00" stroke="#e8e8e8" stroke-width="0.80"/>
<line x1="849.00" y1="137.00" x2="889.00" y2="177.00" stroke="#efefef" stroke-width="0.80"/>
<line x1="857.00" y1="177.00" x2="897.00" y2="137.00" stroke="#e8e8e8" stroke-width="0.80"/>
<line x1="857.00" y1="137.00" x2="897.00" y2="177.00" stroke="#efefef" stroke-width="0.80"/>
<line x1="865.00" y1="177.00" x2="905.00" y2="137.00" stroke="#e8e8e8" stroke-width="0.80"/>
<line x1="865.00" y1="137.00" x2="905.00" y2="177.00" stroke="#efefef" stroke-width="0.80"/>
</g>
<line x1="753.00" y1="138.90" x2="758.70" y2="138.90" stroke="#c0c0c0" stroke-width="1.00"/>
<line x1="753.00" y1="142.92" x2="758.70" y2="142.92" stroke="#c0c0c0" stroke-width="1.00"/>
<line x1="753.00" y1="146.94" x2="758.70" y2="146.94" stroke="#c0c0c0" stroke-width="1.00"/>
<line x1="753.00" y1="150.97" x2="758.70" y2="150.97" stroke="#c0c0c0" stroke-width="1.00"/>
<line x1="753.00" y1="154.99" x2="758.70" y2="154.99" stroke="#c0c0c0" stroke-width="1.00"/>
<line x1="753.00" y1="159.01" x2="758.70" y2="159.01" stroke="#c0c0c0" stroke-width="1.00"/>
<line x1="753.00" y1="163.03" x2="758.70" y2="163.03" stroke="#c0c0c0" stroke-width="1.00"/>
<line x1="753.00" y1="167.06" x2="758.70" y2="167.06" stroke="#c0c0c0" stroke-width="1.00"/>
<line x1="753.00" y1="171.08" x2="758.70" y2="171.08" stroke="#c0c0c0" stroke-width="1.00"/>
<line x1="753.00" y1="175.10" x2="758.70" y2="175.10" stroke="#c0c0c0" stroke-width="1.00"/>
<line x1="762.80" y1="179.50" x2="767.20" y2="179.50" stroke="#bdbdbd" stroke-width="1.10"/>
<line x1="762.80" y1="182.30" x2="767.20" y2="182.30" stroke="#bdbdbd" stroke-width="1.10"/>
<line x1="770.53" y1="179.50" x2="774.93" y2="179.50" stroke="#bdbdbd" stroke-width="1.10"/>
<line x1="770.53" y1="182.30" x2="774.93" y2="182.30" stroke="#bdbdbd" stroke-width="1.10"/>
<line x1="778.25" y1="179.50" x2="782.65" y2="179.50" stroke="#bdbdbd" stroke-width="1.10"/>
<line x1="778.25" y1="182.30" x2="782.65" y2="182.30" stroke="#bdbdbd" stroke-width="1.10"/>
<line x1="785.98" y1="179.50" x2="790.38" y2="179.50" stroke="#bdbdbd" stroke-width="1.10"/>
<line x1="785.98" y1="182.30" x2="790.38" y2="182.30" stroke="#bdbdbd" stroke-width="1.10"/>
<line x1="793.71" y1="179.50" x2="798.11" y2="179.50" stroke="#bdbdbd" stroke-width="1.10"/>
<line x1="793.71" y1="182.30" x2="798.11" y2="182.30" stroke="#bdbdbd" stroke-width="1.10"/>
<line x1="801.44" y1="179.50" x2="805.84" y2="179.50" stroke="#bdbdbd" stroke-width="1.10"/>
<line x1="801.44" y1="182.30" x2="805.84" y2="182.30" stroke="#bdbdbd" stroke-width="1.10"/>
<line x1="809.16" y1="179.50" x2="813.56" y2="179.50" stroke="#bdbdbd" stroke-width="1.10"/>
<line x1="809.16" y1="182.30" x2="813.56" y2="182.30" stroke="#bdbdbd" stroke-width="1.10"/>
<line x1="816.89" y1="179.50" x2="821.29" y2="179.50" stroke="#bdbdbd" stroke-width="1.10"/>
<line x1="816.89" y1="182.30" x2="821.29" y2="182.30" stroke="#bdbdbd" stroke-width="1.10"/>
<line x1="824.62" y1="179.50" x2="829.02" y2="179.50" stroke="#bdbdbd" stroke-width="1.10"/>
<line x1="824.62" y1="182.30" x2="829.02" y2="182.30" stroke="#bdbdbd" stroke-width="1.10"/>
<line x1="832.35" y1="179.50" x2="836.75" y2="179.50" stroke="#bdbdbd" stroke-width="1.10"/>
<line x1="832.35" y1="182.30" x2="836.75" y2="182.30" stroke="#bdbdbd" stroke-width="1.10"/>
<line x1="840.07" y1="179.50" x2="844.47" y2="179.50" stroke="#bdbdbd" stroke-width="1.10"/>
<line x1="840.07" y1="182.30" x2="844.47" y2="182.30" stroke="#bdbdbd" stroke-width="1.10"/>
<line x1="847.80" y1="179.50" x2="852.20" y2="179.50" stroke="#bdbdbd" stroke-width="1.10"/>
<line x1="847.80" y1="182.30" x2="852.20" y2="182.30" stroke="#bdbdbd" stroke-width="1.10"/>
<path d="M765.00 150.97 L772.73 150.02 L780.45 149.08 L788.18 148.13 L795.91 147.19 L803.64 147.45 L811.36 146.50 L819.09 145.56 L826.82 144.61 L834.55 143.67 L842.27 143.93 L850.00 142.98" fill="none" stroke="#5d8fd0" stroke-width="2.00" stroke-linejoin="round"/>
<path d="M765.00 161.02 L772.73 160.40 L780.45 159.78 L788.18 159.15 L795.91 159.25 L803.64 158.63 L811.36 158.01 L819.09 157.38 L826.82 157.48 L834.55 156.86 L842.27 156.24 L850.00 155.61" fill="none" stroke="#d0605a" stroke-width="2.00" stroke-linejoin="round"/>
<line x1="791.00" y1="187.30" x2="801.00" y2="187.30" stroke="#6a98d4" stroke-width="1.30"/>
<line x1="806.00" y1="187.30" x2="817.00" y2="187.30" stroke="#d47070" stroke-width="1.30"/>
<rect x="866.80" y="128.00" width="107.00" height="64.00" fill="url(#tg6)"/>
<line x1="908.00" y1="133.20" x2="932.50" y2="133.20" stroke="#e8e8e8" stroke-width="2.00"/>
<line x1="879.00" y1="138.90" x2="970.00" y2="138.90" stroke="#4c4c4c" stroke-width="0.80"/>
<line x1="879.00" y1="142.92" x2="970.00" y2="142.92" stroke="#4c4c4c" stroke-width="0.80"/>
<line x1="879.00" y1="146.94" x2="970.00" y2="146.94" stroke="#4c4c4c" stroke-width="0.80"/>
<line x1="879.00" y1="150.97" x2="970.00" y2="150.97" stroke="#4c4c4c" stroke-width="0.80"/>
<line x1="879.00" y1="154.99" x2="970.00" y2="154.99" stroke="#4c4c4c" stroke-width="0.80"/>
<line x1="879.00" y1="159.01" x2="970.00" y2="159.01" stroke="#4c4c4c" stroke-width="0.80"/>
<line x1="879.00" y1="163.03" x2="970.00" y2="163.03" stroke="#4c4c4c" stroke-width="0.80"/>
<line x1="879.00" y1="167.06" x2="970.00" y2="167.06" stroke="#4c4c4c" stroke-width="0.80"/>
<line x1="879.00" y1="171.08" x2="970.00" y2="171.08" stroke="#4c4c4c" stroke-width="0.80"/>
<line x1="879.00" y1="175.10" x2="970.00" y2="175.10" stroke="#4c4c4c" stroke-width="0.80"/>
<line x1="869.40" y1="138.90" x2="876.20" y2="138.90" stroke="#8c8c8c" stroke-width="1.00"/>
<line x1="869.40" y1="142.92" x2="876.20" y2="142.92" stroke="#8c8c8c" stroke-width="1.00"/>
<line x1="869.40" y1="146.94" x2="876.20" y2="146.94" stroke="#8c8c8c" stroke-width="1.00"/>
<line x1="869.40" y1="150.97" x2="876.20" y2="150.97" stroke="#8c8c8c" stroke-width="1.00"/>
<line x1="869.40" y1="154.99" x2="876.20" y2="154.99" stroke="#8c8c8c" stroke-width="1.00"/>
<line x1="869.40" y1="159.01" x2="876.20" y2="159.01" stroke="#8c8c8c" stroke-width="1.00"/>
<line x1="869.40" y1="163.03" x2="876.20" y2="163.03" stroke="#8c8c8c" stroke-width="1.00"/>
<line x1="869.40" y1="167.06" x2="876.20" y2="167.06" stroke="#8c8c8c" stroke-width="1.00"/>
<line x1="869.40" y1="171.08" x2="876.20" y2="171.08" stroke="#8c8c8c" stroke-width="1.00"/>
<line x1="869.40" y1="175.10" x2="876.20" y2="175.10" stroke="#8c8c8c" stroke-width="1.00"/>
<line x1="878.40" y1="179.50" x2="882.80" y2="179.50" stroke="#9a9a9a" stroke-width="1.10"/>
<line x1="878.40" y1="182.30" x2="882.80" y2="182.30" stroke="#9a9a9a" stroke-width="1.10"/>
<line x1="886.35" y1="179.50" x2="890.75" y2="179.50" stroke="#9a9a9a" stroke-width="1.10"/>
<line x1="886.35" y1="182.30" x2="890.75" y2="182.30" stroke="#9a9a9a" stroke-width="1.10"/>
<line x1="894.29" y1="179.50" x2="898.69" y2="179.50" stroke="#9a9a9a" stroke-width="1.10"/>
<line x1="894.29" y1="182.30" x2="898.69" y2="182.30" stroke="#9a9a9a" stroke-width="1.10"/>
<line x1="902.24" y1="179.50" x2="906.64" y2="179.50" stroke="#9a9a9a" stroke-width="1.10"/>
<line x1="902.24" y1="182.30" x2="906.64" y2="182.30" stroke="#9a9a9a" stroke-width="1.10"/>
<line x1="910.18" y1="179.50" x2="914.58" y2="179.50" stroke="#9a9a9a" stroke-width="1.10"/>
<line x1="910.18" y1="182.30" x2="914.58" y2="182.30" stroke="#9a9a9a" stroke-width="1.10"/>
<line x1="918.13" y1="179.50" x2="922.53" y2="179.50" stroke="#9a9a9a" stroke-width="1.10"/>
<line x1="918.13" y1="182.30" x2="922.53" y2="182.30" stroke="#9a9a9a" stroke-width="1.10"/>
<line x1="926.07" y1="179.50" x2="930.47" y2="179.50" stroke="#9a9a9a" stroke-width="1.10"/>
<line x1="926.07" y1="182.30" x2="930.47" y2="182.30" stroke="#9a9a9a" stroke-width="1.10"/>
<line x1="934.02" y1="179.50" x2="938.42" y2="179.50" stroke="#9a9a9a" stroke-width="1.10"/>
<line x1="934.02" y1="182.30" x2="938.42" y2="182.30" stroke="#9a9a9a" stroke-width="1.10"/>
<line x1="941.96" y1="179.50" x2="946.36" y2="179.50" stroke="#9a9a9a" stroke-width="1.10"/>
<line x1="941.96" y1="182.30" x2="946.36" y2="182.30" stroke="#9a9a9a" stroke-width="1.10"/>
<line x1="949.91" y1="179.50" x2="954.31" y2="179.50" stroke="#9a9a9a" stroke-width="1.10"/>
<line x1="949.91" y1="182.30" x2="954.31" y2="182.30" stroke="#9a9a9a" stroke-width="1.10"/>
<line x1="957.85" y1="179.50" x2="962.25" y2="179.50" stroke="#9a9a9a" stroke-width="1.10"/>
<line x1="957.85" y1="182.30" x2="962.25" y2="182.30" stroke="#9a9a9a" stroke-width="1.10"/>
<line x1="965.80" y1="179.50" x2="970.20" y2="179.50" stroke="#9a9a9a" stroke-width="1.10"/>
<line x1="965.80" y1="182.30" x2="970.20" y2="182.30" stroke="#9a9a9a" stroke-width="1.10"/>
<path d="M880.60 150.97 L888.55 150.02 L896.49 149.08 L904.44 148.13 L912.38 147.19 L920.33 147.45 L928.27 146.50 L936.22 145.56 L944.16 144.61 L952.11 143.67 L960.05 143.93 L968.00 142.98" fill="none" stroke="#4a78c0" stroke-width="2.20" stroke-linejoin="round"/>
<path d="M880.60 161.02 L888.55 160.40 L896.49 159.78 L904.44 159.15 L912.38 159.25 L920.33 158.63 L928.27 158.01 L936.22 157.38 L944.16 157.48 L952.11 156.86 L960.05 156.24 L968.00 155.61" fill="none" stroke="#b84a48" stroke-width="2.20" stroke-linejoin="round"/>
<line x1="906.00" y1="187.30" x2="916.00" y2="187.30" stroke="#4a78c0" stroke-width="1.30"/>
<line x1="921.00" y1="187.30" x2="932.00" y2="187.30" stroke="#b84a48" stroke-width="1.30"/>
<rect x="984.10" y="128.00" width="107.00" height="64.00" fill="#ffffff" stroke="#e4e4e4" stroke-width="0.80"/>
<line x1="1027.50" y1="133.50" x2="1048.70" y2="133.50" stroke="#b0b0b0" stroke-width="1.40"/>
<line x1="988.50" y1="173.30" x2="1088.00" y2="173.30" stroke="#dcdcdc" stroke-width="1.20"/>
<line x1="987.80" y1="177.60" x2="992.20" y2="177.60" stroke="#c4c4c4" stroke-width="1.10"/>
<line x1="987.80" y1="181.80" x2="992.20" y2="181.80" stroke="#c4c4c4" stroke-width="1.10"/>
<line x1="996.53" y1="177.60" x2="1000.93" y2="177.60" stroke="#c4c4c4" stroke-width="1.10"/>
<line x1="996.53" y1="181.80" x2="1000.93" y2="181.80" stroke="#c4c4c4" stroke-width="1.10"/>
<line x1="1005.25" y1="177.60" x2="1009.65" y2="177.60" stroke="#c4c4c4" stroke-width="1.10"/>
<line x1="1005.25" y1="181.80" x2="1009.65" y2="181.80" stroke="#c4c4c4" stroke-width="1.10"/>
<line x1="1013.98" y1="177.60" x2="1018.38" y2="177.60" stroke="#c4c4c4" stroke-width="1.10"/>
<line x1="1013.98" y1="181.80" x2="1018.38" y2="181.80" stroke="#c4c4c4" stroke-width="1.10"/>
<line x1="1022.71" y1="177.60" x2="1027.11" y2="177.60" stroke="#c4c4c4" stroke-width="1.10"/>
<line x1="1022.71" y1="181.80" x2="1027.11" y2="181.80" stroke="#c4c4c4" stroke-width="1.10"/>
<line x1="1031.44" y1="177.60" x2="1035.84" y2="177.60" stroke="#c4c4c4" stroke-width="1.10"/>
<line x1="1031.44" y1="181.80" x2="1035.84" y2="181.80" stroke="#c4c4c4" stroke-width="1.10"/>
<line x1="1040.16" y1="177.60" x2="1044.56" y2="177.60" stroke="#c4c4c4" stroke-width="1.10"/>
<line x1="1040.16" y1="181.80" x2="1044.56" y2="181.80" stroke="#c4c4c4" stroke-width="1.10"/>
<line x1="1048.89" y1="177.60" x2="1053.29" y2="177.60" stroke="#c4c4c4" stroke-width="1.10"/>
<line x1="1048.89" y1="181.80" x2="1053.29" y2="181.80" stroke="#c4c4c4" stroke-width="1.10"/>
<line x1="1057.62" y1="177.60" x2="1062.02" y2="177.60" stroke="#c4c4c4" stroke-width="1.10"/>
<line x1="1057.62" y1="181.80" x2="1062.02" y2="181.80" stroke="#c4c4c4" stroke-width="1.10"/>
<line x1="1066.35" y1="177.60" x2="1070.75" y2="177.60" stroke="#c4c4c4" stroke-width="1.10"/>
<line x1="1066.35" y1="181.80" x2="1070.75" y2="181.80" stroke="#c4c4c4" stroke-width="1.10"/>
<line x1="1075.07" y1="177.60" x2="1079.47" y2="177.60" stroke="#c4c4c4" stroke-width="1.10"/>
<line x1="1075.07" y1="181.80" x2="1079.47" y2="181.80" stroke="#c4c4c4" stroke-width="1.10"/>
<line x1="1083.80" y1="177.60" x2="1088.20" y2="177.60" stroke="#c4c4c4" stroke-width="1.10"/>
<line x1="1083.80" y1="181.80" x2="1088.20" y2="181.80" stroke="#c4c4c4" stroke-width="1.10"/>
<path d="M988.70 150.34 L991.69 150.76 L994.69 150.02 L997.68 150.27 L1000.68 150.01 L1003.67 148.35 L1006.66 147.91 L1009.66 149.57 L1012.65 147.87 L1015.65 147.49 L1018.64 149.01 L1021.63 147.43 L1024.63 147.99 L1027.62 147.22 L1030.62 147.69 L1033.61 146.61 L1036.60 147.46 L1039.60 147.70 L1042.59 146.56 L1045.58 146.77 L1048.58 146.28 L1051.57 144.51 L1054.57 145.86 L1057.56 145.15 L1060.55 144.13 L1063.55 143.17 L1066.54 144.86 L1069.54 143.60 L1072.53 144.28 L1075.52 144.75 L1078.52 144.44 L1081.51 144.62 L1084.51 143.05 L1087.50 142.98" fill="none" stroke="#5d8fd0" stroke-width="1.80" stroke-linejoin="round"/>
<path d="M988.70 161.74 L991.69 160.68 L994.69 161.65 L997.68 161.31 L1000.68 159.22 L1003.67 159.11 L1006.66 159.10 L1009.66 160.68 L1012.65 159.21 L1015.65 159.46 L1018.64 158.71 L1021.63 159.24 L1024.63 158.98 L1027.62 158.69 L1030.62 159.04 L1033.61 158.83 L1036.60 159.39 L1039.60 158.65 L1042.59 159.04 L1045.58 158.65 L1048.58 158.77 L1051.57 157.79 L1054.57 156.61 L1057.56 158.31 L1060.55 158.60 L1063.55 158.25 L1066.54 157.23 L1069.54 157.37 L1072.53 155.96 L1075.52 157.24 L1078.52 156.41 L1081.51 155.51 L1084.51 154.77 L1087.50 155.61" fill="none" stroke="#d0605a" stroke-width="1.80" stroke-linejoin="round"/>
<line x1="1025.60" y1="187.30" x2="1035.60" y2="187.30" stroke="#6a98d4" stroke-width="1.30"/>
<line x1="1040.60" y1="187.30" x2="1051.60" y2="187.30" stroke="#d47070" stroke-width="1.30"/>
<rect x="1101.40" y="128.00" width="107.00" height="64.00" fill="#ffffff" stroke="#e4e4e4" stroke-width="0.80"/>
<line x1="1142.00" y1="134.10" x2="1168.00" y2="134.10" stroke="#a0a0a0" stroke-width="1.60"/>
<line x1="1142.50" y1="141.60" x2="1152.50" y2="141.60" stroke="#6a98d4" stroke-width="1.30"/>
<line x1="1157.50" y1="141.60" x2="1168.50" y2="141.60" stroke="#d47070" stroke-width="1.30"/>
<rect x="1113.00" y="145.80" width="92.00" height="36.80" fill="#e6e6e6"/>
<line x1="1113.00" y1="145.80" x2="1205.00" y2="145.80" stroke="#f4f4f4" stroke-width="0.80"/>
<line x1="1113.00" y1="150.40" x2="1205.00" y2="150.40" stroke="#f4f4f4" stroke-width="0.80"/>
<line x1="1113.00" y1="155.00" x2="1205.00" y2="155.00" stroke="#f4f4f4" stroke-width="0.80"/>
<line x1="1113.00" y1="159.60" x2="1205.00" y2="159.60" stroke="#f4f4f4" stroke-width="0.80"/>
<line x1="1113.00" y1="164.20" x2="1205.00" y2="164.20" stroke="#f4f4f4" stroke-width="0.80"/>
<line x1="1113.00" y1="168.80" x2="1205.00" y2="168.80" stroke="#f4f4f4" stroke-width="0.80"/>
<line x1="1113.00" y1="173.40" x2="1205.00" y2="173.40" stroke="#f4f4f4" stroke-width="0.80"/>
<line x1="1113.00" y1="178.00" x2="1205.00" y2="178.00" stroke="#f4f4f4" stroke-width="0.80"/>
<line x1="1113.00" y1="182.60" x2="1205.00" y2="182.60" stroke="#f4f4f4" stroke-width="0.80"/>
<line x1="1103.70" y1="147.00" x2="1110.60" y2="147.00" stroke="#bdbdbd" stroke-width="1.00"/>
<line x1="1103.70" y1="151.25" x2="1110.60" y2="151.25" stroke="#bdbdbd" stroke-width="1.00"/>
<line x1="1103.70" y1="155.50" x2="1110.60" y2="155.50" stroke="#bdbdbd" stroke-width="1.00"/>
<line x1="1103.70" y1="159.75" x2="1110.60" y2="159.75" stroke="#bdbdbd" stroke-width="1.00"/>
<line x1="1103.70" y1="164.00" x2="1110.60" y2="164.00" stroke="#bdbdbd" stroke-width="1.00"/>
<line x1="1103.70" y1="168.25" x2="1110.60" y2="168.25" stroke="#bdbdbd" stroke-width="1.00"/>
<line x1="1103.70" y1="172.50" x2="1110.60" y2="172.50" stroke="#bdbdbd" stroke-width="1.00"/>
<line x1="1103.70" y1="176.75" x2="1110.60" y2="176.75" stroke="#bdbdbd" stroke-width="1.00"/>
<line x1="1103.70" y1="181.00" x2="1110.60" y2="181.00" stroke="#bdbdbd" stroke-width="1.00"/>
<line x1="1114.80" y1="186.40" x2="1119.20" y2="186.40" stroke="#c0c0c0" stroke-width="1.10"/>
<line x1="1114.80" y1="189.00" x2="1119.20" y2="189.00" stroke="#c0c0c0" stroke-width="1.10"/>
<line x1="1122.53" y1="186.40" x2="1126.93" y2="186.40" stroke="#c0c0c0" stroke-width="1.10"/>
<line x1="1122.53" y1="189.00" x2="1126.93" y2="189.00" stroke="#c0c0c0" stroke-width="1.10"/>
<line x1="1130.25" y1="186.40" x2="1134.65" y2="186.40" stroke="#c0c0c0" stroke-width="1.10"/>
<line x1="1130.25" y1="189.00" x2="1134.65" y2="189.00" stroke="#c0c0c0" stroke-width="1.10"/>
<line x1="1137.98" y1="186.40" x2="1142.38" y2="186.40" stroke="#c0c0c0" stroke-width="1.10"/>
<line x1="1137.98" y1="189.00" x2="1142.38" y2="189.00" stroke="#c0c0c0" stroke-width="1.10"/>
<line x1="1145.71" y1="186.40" x2="1150.11" y2="186.40" stroke="#c0c0c0" stroke-width="1.10"/>
<line x1="1145.71" y1="189.00" x2="1150.11" y2="189.00" stroke="#c0c0c0" stroke-width="1.10"/>
<line x1="1153.44" y1="186.40" x2="1157.84" y2="186.40" stroke="#c0c0c0" stroke-width="1.10"/>
<line x1="1153.44" y1="189.00" x2="1157.84" y2="189.00" stroke="#c0c0c0" stroke-width="1.10"/>
<line x1="1161.16" y1="186.40" x2="1165.56" y2="186.40" stroke="#c0c0c0" stroke-width="1.10"/>
<line x1="1161.16" y1="189.00" x2="1165.56" y2="189.00" stroke="#c0c0c0" stroke-width="1.10"/>
<line x1="1168.89" y1="186.40" x2="1173.29" y2="186.40" stroke="#c0c0c0" stroke-width="1.10"/>
<line x1="1168.89" y1="189.00" x2="1173.29" y2="189.00" stroke="#c0c0c0" stroke-width="1.10"/>
<line x1="1176.62" y1="186.40" x2="1181.02" y2="186.40" stroke="#c0c0c0" stroke-width="1.10"/>
<line x1="1176.62" y1="189.00" x2="1181.02" y2="189.00" stroke="#c0c0c0" stroke-width="1.10"/>
<line x1="1184.35" y1="186.40" x2="1188.75" y2="186.40" stroke="#c0c0c0" stroke-width="1.10"/>
<line x1="1184.35" y1="189.00" x2="1188.75" y2="189.00" stroke="#c0c0c0" stroke-width="1.10"/>
<line x1="1192.07" y1="186.40" x2="1196.47" y2="186.40" stroke="#c0c0c0" stroke-width="1.10"/>
<line x1="1192.07" y1="189.00" x2="1196.47" y2="189.00" stroke="#c0c0c0" stroke-width="1.10"/>
<line x1="1199.80" y1="186.40" x2="1204.20" y2="186.40" stroke="#c0c0c0" stroke-width="1.10"/>
<line x1="1199.80" y1="189.00" x2="1204.20" y2="189.00" stroke="#c0c0c0" stroke-width="1.10"/>
<path d="M1116.90 159.13 L1124.63 158.18 L1132.35 157.22 L1140.08 156.26 L1147.81 155.30 L1155.54 155.57 L1163.26 154.61 L1170.99 153.65 L1178.72 152.69 L1186.45 151.73 L1194.17 152.00 L1201.90 151.04" fill="none" stroke="#5d8fd0" stroke-width="2.20" stroke-linejoin="round"/>
<path d="M1116.90 169.33 L1124.63 168.70 L1132.35 168.06 L1140.08 167.43 L1147.81 167.53 L1155.54 166.90 L1163.26 166.27 L1170.99 165.64 L1178.72 165.74 L1186.45 165.11 L1194.17 164.48 L1201.90 163.84" fill="none" stroke="#d0605a" stroke-width="2.20" stroke-linejoin="round"/>
</g>
<rect x="105.50" y="207.00" width="256.00" height="333.00" fill="#ffffff" filter="url(#sh3)"/>
<rect x="108.30" y="209.70" width="250.40" height="327.40" fill="#ffffff" stroke="#0046e0" stroke-width="5.60"/>
<rect x="118.30" y="219.30" width="63.40" height="63.00" fill="#f7f7f7" stroke="#444444" stroke-width="1.30"/>
<rect x="192.90" y="219.30" width="63.40" height="63.00" fill="#f7f7f7" stroke="#444444" stroke-width="1.30"/>
<rect x="267.50" y="219.30" width="63.40" height="63.00" fill="#f7f7f7" stroke="#444444" stroke-width="1.30"/>
<rect x="118.30" y="294.00" width="63.40" height="63.00" fill="#f7f7f7" stroke="#444444" stroke-width="1.30"/>
<rect x="192.90" y="294.00" width="63.40" height="63.00" fill="#f7f7f7" stroke="#444444" stroke-width="1.30"/>
<rect x="267.50" y="294.00" width="63.40" height="63.00" fill="#f7f7f7" stroke="#444444" stroke-width="1.30"/>
<rect x="118.30" y="368.70" width="63.40" height="63.00" fill="#f7f7f7" stroke="#444444" stroke-width="1.30"/>
<rect x="192.90" y="368.70" width="63.40" height="63.00" fill="#f7f7f7" stroke="#444444" stroke-width="1.30"/>
<rect x="267.50" y="368.70" width="63.40" height="63.00" fill="#f7f7f7" stroke="#444444" stroke-width="1.30"/>
<rect x="118.30" y="443.40" width="63.40" height="63.00" fill="#f7f7f7" stroke="#444444" stroke-width="1.30"/>
<rect x="192.90" y="443.40" width="63.40" height="63.00" fill="#f7f7f7" stroke="#444444" stroke-width="1.30"/>
<rect x="267.50" y="443.40" width="63.40" height="63.00" fill="#f7f7f7" stroke="#444444" stroke-width="1.30"/>
<rect x="134.10" y="225.40" width="31.70" height="3.40" fill="#9a9a9a"/>
<line x1="128.50" y1="239.30" x2="164.80" y2="239.30" stroke="#c4c4c4" stroke-width="1.10"/>
<line x1="128.50" y1="247.30" x2="164.80" y2="247.30" stroke="#c4c4c4" stroke-width="1.10"/>
<line x1="128.50" y1="255.30" x2="164.80" y2="255.30" stroke="#c4c4c4" stroke-width="1.10"/>
<line x1="128.50" y1="263.30" x2="164.80" y2="263.30" stroke="#c4c4c4" stroke-width="1.10"/>
<line x1="128.50" y1="239.10" x2="128.50" y2="271.30" stroke="#3c3c3c" stroke-width="1.10"/>
<line x1="125.20" y1="243.30" x2="128.50" y2="243.30" stroke="#3c3c3c" stroke-width="1.10"/>
<line x1="125.20" y1="251.30" x2="128.50" y2="251.30" stroke="#3c3c3c" stroke-width="1.10"/>
<line x1="125.20" y1="259.30" x2="128.50" y2="259.30" stroke="#3c3c3c" stroke-width="1.10"/>
<line x1="125.20" y1="267.30" x2="128.50" y2="267.30" stroke="#3c3c3c" stroke-width="1.10"/>
<line x1="128.50" y1="271.30" x2="164.80" y2="271.30" stroke="#3c3c3c" stroke-width="1.20"/>
<rect x="120.70" y="244.30" width="1.80" height="22.00" fill="#9a9a9a"/>
<line x1="130.00" y1="275.30" x2="133.60" y2="275.30" stroke="#3c3c3c" stroke-width="1.10"/>
<line x1="139.30" y1="275.30" x2="142.90" y2="275.30" stroke="#3c3c3c" stroke-width="1.10"/>
<line x1="148.50" y1="275.30" x2="152.10" y2="275.30" stroke="#3c3c3c" stroke-width="1.10"/>
<line x1="158.50" y1="275.30" x2="162.10" y2="275.30" stroke="#3c3c3c" stroke-width="1.10"/>
<path d="M131.80 261.90 L138.80 252.60 L147.90 262.20 L162.80 246.10" fill="none" stroke="#3c3c3c" stroke-width="1.50"/>
<rect x="129.90" y="260.00" width="3.80" height="3.80" fill="#3c3c3c"/>
<rect x="136.90" y="250.70" width="3.80" height="3.80" fill="#3c3c3c"/>
<rect x="146.00" y="260.30" width="3.80" height="3.80" fill="#3c3c3c"/>
<rect x="160.90" y="244.20" width="3.80" height="3.80" fill="#3c3c3c"/>
<rect x="166.50" y="247.00" width="12.10" height="15.60" fill="#ffffff" stroke="#3c3c3c" stroke-width="1.10"/>
<rect x="169.00" y="251.40" width="1.60" height="1.60" fill="#888888"/>
<line x1="171.50" y1="251.70" x2="175.60" y2="251.70" stroke="#999999" stroke-width="0.70"/>
<rect x="169.00" y="256.60" width="1.60" height="1.60" fill="#888888"/>
<line x1="171.50" y1="256.90" x2="175.60" y2="256.90" stroke="#999999" stroke-width="0.70"/>
<rect x="208.70" y="224.20" width="31.70" height="3.40" fill="#9a9a9a"/>
<rect x="208.70" y="229.30" width="31.20" height="7.50" fill="#ffffff" stroke="#3c3c3c" stroke-width="1.10"/>
<rect x="212.44" y="232.25" width="1.60" height="1.60" fill="#888888"/>
<line x1="214.94" y1="232.45" x2="222.44" y2="232.45" stroke="#999999" stroke-width="0.70"/>
<rect x="226.48" y="232.25" width="1.60" height="1.60" fill="#888888"/>
<line x1="228.98" y1="232.45" x2="236.48" y2="232.45" stroke="#999999" stroke-width="0.70"/>
<path d="M207.80 259.30 L218.40 254.00 L227.60 263.50 L242.40 247.40" fill="none" stroke="#3c3c3c" stroke-width="1.50"/>
<rect x="205.90" y="257.40" width="3.80" height="3.80" fill="#3c3c3c"/>
<rect x="216.50" y="252.10" width="3.80" height="3.80" fill="#3c3c3c"/>
<rect x="225.70" y="261.60" width="3.80" height="3.80" fill="#3c3c3c"/>
<rect x="240.50" y="245.50" width="3.80" height="3.80" fill="#3c3c3c"/>
<line x1="206.20" y1="255.30" x2="209.40" y2="255.30" stroke="#3c3c3c" stroke-width="0.90"/>
<line x1="216.80" y1="250.00" x2="220.00" y2="250.00" stroke="#3c3c3c" stroke-width="0.90"/>
<line x1="226.00" y1="259.50" x2="229.20" y2="259.50" stroke="#3c3c3c" stroke-width="0.90"/>
<line x1="240.80" y1="243.40" x2="244.00" y2="243.40" stroke="#3c3c3c" stroke-width="0.90"/>
<line x1="200.80" y1="271.30" x2="247.90" y2="271.30" stroke="#3c3c3c" stroke-width="1.20"/>
<line x1="206.90" y1="275.30" x2="210.50" y2="275.30" stroke="#3c3c3c" stroke-width="1.10"/>
<line x1="217.50" y1="275.30" x2="221.10" y2="275.30" stroke="#3c3c3c" stroke-width="1.10"/>
<line x1="228.70" y1="275.30" x2="232.30" y2="275.30" stroke="#3c3c3c" stroke-width="1.10"/>
<line x1="239.30" y1="275.30" x2="242.90" y2="275.30" stroke="#3c3c3c" stroke-width="1.10"/>
<rect x="283.30" y="225.40" width="31.70" height="3.40" fill="#9a9a9a"/>
<line x1="275.20" y1="235.40" x2="324.50" y2="235.40" stroke="#c4c4c4" stroke-width="1.10"/>
<line x1="275.20" y1="244.40" x2="324.50" y2="244.40" stroke="#c4c4c4" stroke-width="1.10"/>
<line x1="275.20" y1="254.00" x2="324.50" y2="254.00" stroke="#c4c4c4" stroke-width="1.10"/>
<line x1="271.50" y1="239.30" x2="275.00" y2="239.30" stroke="#3c3c3c" stroke-width="1.10"/>
<line x1="271.50" y1="248.60" x2="275.00" y2="248.60" stroke="#3c3c3c" stroke-width="1.10"/>
<line x1="271.50" y1="258.00" x2="275.00" y2="258.00" stroke="#3c3c3c" stroke-width="1.10"/>
<line x1="275.20" y1="263.30" x2="324.50" y2="263.30" stroke="#3c3c3c" stroke-width="1.20"/>
<path d="M282.70 254.00 L293.20 248.30 L302.20 258.30 L317.00 242.10" fill="none" stroke="#3c3c3c" stroke-width="1.50"/>
<rect x="280.80" y="252.10" width="3.80" height="3.80" fill="#3c3c3c"/>
<rect x="291.30" y="246.40" width="3.80" height="3.80" fill="#3c3c3c"/>
<rect x="300.30" y="256.40" width="3.80" height="3.80" fill="#3c3c3c"/>
<rect x="315.10" y="240.20" width="3.80" height="3.80" fill="#3c3c3c"/>
<line x1="281.50" y1="267.30" x2="285.10" y2="267.30" stroke="#3c3c3c" stroke-width="1.10"/>
<line x1="292.10" y1="267.30" x2="295.70" y2="267.30" stroke="#3c3c3c" stroke-width="1.10"/>
<line x1="302.90" y1="267.30" x2="306.50" y2="267.30" stroke="#3c3c3c" stroke-width="1.10"/>
<line x1="313.90" y1="267.30" x2="317.50" y2="267.30" stroke="#3c3c3c" stroke-width="1.10"/>
<rect x="283.30" y="271.70" width="31.10" height="6.30" fill="#ffffff" stroke="#3c3c3c" stroke-width="1.10"/>
<rect x="287.03" y="274.05" width="1.60" height="1.60" fill="#888888"/>
<line x1="289.53" y1="274.25" x2="297.03" y2="274.25" stroke="#999999" stroke-width="0.70"/>
<rect x="301.03" y="274.05" width="1.60" height="1.60" fill="#888888"/>
<line x1="303.53" y1="274.25" x2="311.03" y2="274.25" stroke="#999999" stroke-width="0.70"/>
<line x1="126.70" y1="304.60" x2="126.70" y2="336.50" stroke="#3c3c3c" stroke-width="1.10"/>
<line x1="123.40" y1="308.50" x2="126.70" y2="308.50" stroke="#3c3c3c" stroke-width="1.10"/>
<line x1="123.40" y1="316.70" x2="126.70" y2="316.70" stroke="#3c3c3c" stroke-width="1.10"/>
<line x1="123.40" y1="324.60" x2="126.70" y2="324.60" stroke="#3c3c3c" stroke-width="1.10"/>
<line x1="123.40" y1="332.50" x2="126.70" y2="332.50" stroke="#3c3c3c" stroke-width="1.10"/>
<line x1="126.70" y1="336.50" x2="173.30" y2="336.50" stroke="#3c3c3c" stroke-width="1.20"/>
<path d="M133.10 325.00 L143.60 319.10 L153.10 329.00 L168.10 312.70" fill="none" stroke="#3c3c3c" stroke-width="1.50"/>
<rect x="131.20" y="323.10" width="3.80" height="3.80" fill="#3c3c3c"/>
<rect x="141.70" y="317.20" width="3.80" height="3.80" fill="#3c3c3c"/>
<rect x="151.20" y="327.10" width="3.80" height="3.80" fill="#3c3c3c"/>
<rect x="166.20" y="310.80" width="3.80" height="3.80" fill="#3c3c3c"/>
<line x1="132.60" y1="340.50" x2="136.20" y2="340.50" stroke="#3c3c3c" stroke-width="1.10"/>
<line x1="143.40" y1="340.50" x2="147.00" y2="340.50" stroke="#3c3c3c" stroke-width="1.10"/>
<line x1="154.40" y1="340.50" x2="158.00" y2="340.50" stroke="#3c3c3c" stroke-width="1.10"/>
<line x1="164.90" y1="340.50" x2="168.50" y2="340.50" stroke="#3c3c3c" stroke-width="1.10"/>
<rect x="134.40" y="346.10" width="31.00" height="6.60" fill="#ffffff" stroke="#3c3c3c" stroke-width="1.10"/>
<rect x="138.12" y="348.60" width="1.60" height="1.60" fill="#888888"/>
<line x1="140.62" y1="348.80" x2="148.12" y2="348.80" stroke="#999999" stroke-width="0.70"/>
<rect x="152.07" y="348.60" width="1.60" height="1.60" fill="#888888"/>
<line x1="154.57" y1="348.80" x2="162.07" y2="348.80" stroke="#999999" stroke-width="0.70"/>
<rect x="208.70" y="300.10" width="31.70" height="3.40" fill="#9a9a9a"/>
<line x1="208.70" y1="308.80" x2="252.30" y2="308.80" stroke="#c4c4c4" stroke-width="1.10"/>
<line x1="208.70" y1="318.00" x2="252.30" y2="318.00" stroke="#c4c4c4" stroke-width="1.10"/>
<line x1="208.70" y1="327.30" x2="252.30" y2="327.30" stroke="#c4c4c4" stroke-width="1.10"/>
<rect x="199.00" y="311.20" width="1.80" height="21.80" fill="#9a9a9a"/>
<line x1="208.70" y1="307.90" x2="208.70" y2="336.50" stroke="#3c3c3c" stroke-width="1.10"/>
<line x1="205.40" y1="312.70" x2="208.70" y2="312.70" stroke="#3c3c3c" stroke-width="1.10"/>
<line x1="205.40" y1="322.00" x2="208.70" y2="322.00" stroke="#3c3c3c" stroke-width="1.10"/>
<line x1="205.40" y1="331.40" x2="208.70" y2="331.40" stroke="#3c3c3c" stroke-width="1.10"/>
<path d="M213.10 313.90 L230.50 331.40 L245.00 313.90" fill="none" stroke="#3c3c3c" stroke-width="1.50"/>
<rect x="211.20" y="312.00" width="3.80" height="3.80" fill="#3c3c3c"/>
<rect x="228.60" y="329.50" width="3.80" height="3.80" fill="#3c3c3c"/>
<rect x="243.10" y="312.00" width="3.80" height="3.80" fill="#3c3c3c"/>
<path d="M213.10 331.40 L229.20 312.60 L247.90 331.40" fill="none" stroke="#3c3c3c" stroke-width="1.50"/>
<rect x="211.20" y="329.50" width="3.80" height="3.80" fill="#3c3c3c"/>
<rect x="227.30" y="310.70" width="3.80" height="3.80" fill="#3c3c3c"/>
<rect x="246.00" y="329.50" width="3.80" height="3.80" fill="#3c3c3c"/>
<rect x="197.30" y="336.50" width="55.00" height="16.50" fill="#f7f7f7" stroke="#3c3c3c" stroke-width="1.10"/>
<line x1="197.30" y1="344.50" x2="252.30" y2="344.50" stroke="#3c3c3c" stroke-width="1.10"/>
<line x1="208.10" y1="336.50" x2="208.10" y2="353.00" stroke="#3c3c3c" stroke-width="1.10"/>
<line x1="222.30" y1="336.50" x2="222.30" y2="353.00" stroke="#3c3c3c" stroke-width="1.10"/>
<line x1="236.80" y1="336.50" x2="236.80" y2="353.00" stroke="#3c3c3c" stroke-width="1.10"/>
<rect x="199.40" y="339.70" width="1.60" height="1.60" fill="#888888"/>
<line x1="210.40" y1="340.50" x2="219.40" y2="340.50" stroke="#999999" stroke-width="0.80"/>
<line x1="224.60" y1="340.50" x2="233.60" y2="340.50" stroke="#999999" stroke-width="0.80"/>
<line x1="239.10" y1="340.50" x2="248.10" y2="340.50" stroke="#999999" stroke-width="0.80"/>
<rect x="199.40" y="347.90" width="1.60" height="1.60" fill="#888888"/>
<line x1="210.40" y1="348.70" x2="219.40" y2="348.70" stroke="#999999" stroke-width="0.80"/>
<line x1="224.60" y1="348.70" x2="233.60" y2="348.70" stroke="#999999" stroke-width="0.80"/>
<line x1="239.10" y1="348.70" x2="248.10" y2="348.70" stroke="#999999" stroke-width="0.80"/>
<rect x="283.30" y="300.10" width="31.70" height="3.40" fill="#9a9a9a"/>
<line x1="277.00" y1="313.80" x2="324.50" y2="313.80" stroke="#c4c4c4" stroke-width="1.10"/>
<line x1="277.00" y1="321.70" x2="324.50" y2="321.70" stroke="#c4c4c4" stroke-width="1.10"/>
<line x1="277.00" y1="329.60" x2="324.50" y2="329.60" stroke="#c4c4c4" stroke-width="1.10"/>
<line x1="277.00" y1="337.50" x2="324.50" y2="337.50" stroke="#c4c4c4" stroke-width="1.10"/>
<rect x="270.30" y="319.50" width="1.80" height="21.50" fill="#9a9a9a"/>
<line x1="277.00" y1="313.00" x2="277.00" y2="346.00" stroke="#3c3c3c" stroke-width="1.10"/>
<line x1="273.70" y1="317.80" x2="277.00" y2="317.80" stroke="#3c3c3c" stroke-width="1.10"/>
<line x1="273.70" y1="325.70" x2="277.00" y2="325.70" stroke="#3c3c3c" stroke-width="1.10"/>
<line x1="273.70" y1="333.60" x2="277.00" y2="333.60" stroke="#3c3c3c" stroke-width="1.10"/>
<line x1="273.70" y1="341.50" x2="277.00" y2="341.50" stroke="#3c3c3c" stroke-width="1.10"/>
<line x1="277.00" y1="346.00" x2="324.50" y2="346.00" stroke="#3c3c3c" stroke-width="1.20"/>
<path d="M284.90 336.20 L291.50 327.00 L301.10 336.60 L315.70 320.40" fill="none" stroke="#3c3c3c" stroke-width="1.50"/>
<rect x="283.00" y="334.30" width="3.80" height="3.80" fill="#3c3c3c"/>
<rect x="289.60" y="325.10" width="3.80" height="3.80" fill="#3c3c3c"/>
<rect x="299.20" y="334.70" width="3.80" height="3.80" fill="#3c3c3c"/>
<rect x="313.80" y="318.50" width="3.80" height="3.80" fill="#3c3c3c"/>
<line x1="319.00" y1="319.50" x2="322.50" y2="319.50" stroke="#3c3c3c" stroke-width="0.90"/>
<line x1="283.10" y1="350.00" x2="286.70" y2="350.00" stroke="#3c3c3c" stroke-width="1.10"/>
<line x1="294.10" y1="350.00" x2="297.70" y2="350.00" stroke="#3c3c3c" stroke-width="1.10"/>
<line x1="304.60" y1="350.00" x2="308.20" y2="350.00" stroke="#3c3c3c" stroke-width="1.10"/>
<line x1="315.20" y1="350.00" x2="318.80" y2="350.00" stroke="#3c3c3c" stroke-width="1.10"/>
<line x1="128.50" y1="384.80" x2="164.80" y2="384.80" stroke="#c4c4c4" stroke-width="1.10"/>
<line x1="128.50" y1="393.00" x2="164.80" y2="393.00" stroke="#c4c4c4" stroke-width="1.10"/>
<line x1="128.50" y1="400.90" x2="164.80" y2="400.90" stroke="#c4c4c4" stroke-width="1.10"/>
<line x1="128.50" y1="408.80" x2="164.80" y2="408.80" stroke="#c4c4c4" stroke-width="1.10"/>
<line x1="128.50" y1="383.60" x2="128.50" y2="415.80" stroke="#3c3c3c" stroke-width="1.10"/>
<line x1="125.20" y1="388.80" x2="128.50" y2="388.80" stroke="#3c3c3c" stroke-width="1.10"/>
<line x1="125.20" y1="397.00" x2="128.50" y2="397.00" stroke="#3c3c3c" stroke-width="1.10"/>
<line x1="125.20" y1="404.90" x2="128.50" y2="404.90" stroke="#3c3c3c" stroke-width="1.10"/>
<line x1="125.20" y1="412.70" x2="128.50" y2="412.70" stroke="#3c3c3c" stroke-width="1.10"/>
<line x1="128.50" y1="415.80" x2="164.80" y2="415.80" stroke="#3c3c3c" stroke-width="1.20"/>
<rect x="120.70" y="390.10" width="1.80" height="21.80" fill="#9a9a9a"/>
<line x1="131.80" y1="404.90" x2="131.80" y2="415.80" stroke="#777777" stroke-width="0.80" stroke-dasharray="1.2 1.2"/>
<line x1="138.80" y1="395.40" x2="138.80" y2="415.80" stroke="#777777" stroke-width="0.80" stroke-dasharray="1.2 1.2"/>
<line x1="147.90" y1="404.90" x2="147.90" y2="415.80" stroke="#777777" stroke-width="0.80" stroke-dasharray="1.2 1.2"/>
<line x1="162.80" y1="388.80" x2="162.80" y2="415.80" stroke="#777777" stroke-width="0.80" stroke-dasharray="1.2 1.2"/>
<path d="M131.80 404.90 L138.80 395.40 L147.90 404.90 L162.80 388.80" fill="none" stroke="#3c3c3c" stroke-width="1.50"/>
<rect x="129.90" y="403.00" width="3.80" height="3.80" fill="#3c3c3c"/>
<rect x="136.90" y="393.50" width="3.80" height="3.80" fill="#3c3c3c"/>
<rect x="146.00" y="403.00" width="3.80" height="3.80" fill="#3c3c3c"/>
<rect x="160.90" y="386.90" width="3.80" height="3.80" fill="#3c3c3c"/>
<line x1="130.00" y1="420.50" x2="133.60" y2="420.50" stroke="#3c3c3c" stroke-width="1.10"/>
<line x1="139.30" y1="420.50" x2="142.90" y2="420.50" stroke="#3c3c3c" stroke-width="1.10"/>
<line x1="148.50" y1="420.50" x2="152.10" y2="420.50" stroke="#3c3c3c" stroke-width="1.10"/>
<line x1="158.50" y1="420.50" x2="162.10" y2="420.50" stroke="#3c3c3c" stroke-width="1.10"/>
<rect x="134.10" y="424.60" width="23.40" height="2.20" fill="#8a8a8a"/>
<rect x="166.50" y="392.70" width="12.10" height="15.30" fill="#ffffff" stroke="#3c3c3c" stroke-width="1.10"/>
<rect x="169.00" y="397.00" width="1.60" height="1.60" fill="#888888"/>
<line x1="171.50" y1="397.30" x2="175.60" y2="397.30" stroke="#999999" stroke-width="0.70"/>
<rect x="169.00" y="402.10" width="1.60" height="1.60" fill="#888888"/>
<line x1="171.50" y1="402.40" x2="175.60" y2="402.40" stroke="#999999" stroke-width="0.70"/>
<rect x="208.70" y="375.20" width="31.70" height="3.40" fill="#9a9a9a" stroke="#7a7a7a" stroke-width="0.60"/>
<path d="M207.80 403.60 L218.40 398.00 L227.60 407.60 L242.40 391.70" fill="none" stroke="#3c3c3c" stroke-width="1.50"/>
<rect x="205.90" y="401.70" width="3.80" height="3.80" fill="#3c3c3c"/>
<rect x="216.50" y="396.10" width="3.80" height="3.80" fill="#3c3c3c"/>
<rect x="225.70" y="405.70" width="3.80" height="3.80" fill="#3c3c3c"/>
<rect x="240.50" y="389.80" width="3.80" height="3.80" fill="#3c3c3c"/>
<line x1="206.20" y1="399.60" x2="209.40" y2="399.60" stroke="#3c3c3c" stroke-width="0.90"/>
<line x1="216.80" y1="394.00" x2="220.00" y2="394.00" stroke="#3c3c3c" stroke-width="0.90"/>
<line x1="226.00" y1="403.60" x2="229.20" y2="403.60" stroke="#3c3c3c" stroke-width="0.90"/>
<line x1="240.80" y1="387.70" x2="244.00" y2="387.70" stroke="#3c3c3c" stroke-width="0.90"/>
<line x1="206.90" y1="416.70" x2="210.50" y2="416.70" stroke="#3c3c3c" stroke-width="1.10"/>
<line x1="217.50" y1="416.70" x2="221.10" y2="416.70" stroke="#3c3c3c" stroke-width="1.10"/>
<line x1="228.70" y1="416.70" x2="232.30" y2="416.70" stroke="#3c3c3c" stroke-width="1.10"/>
<line x1="239.30" y1="416.70" x2="242.90" y2="416.70" stroke="#3c3c3c" stroke-width="1.10"/>
<rect x="208.70" y="420.70" width="31.10" height="6.90" fill="#ffffff" stroke="#3c3c3c" stroke-width="1.10"/>
<rect x="212.43" y="423.35" width="1.60" height="1.60" fill="#888888"/>
<line x1="214.93" y1="423.55" x2="222.43" y2="423.55" stroke="#999999" stroke-width="0.70"/>
<rect x="226.43" y="423.35" width="1.60" height="1.60" fill="#888888"/>
<line x1="228.93" y1="423.55" x2="236.43" y2="423.55" stroke="#999999" stroke-width="0.70"/>
<rect x="283.30" y="375.20" width="31.70" height="3.40" fill="#9a9a9a" stroke="#7a7a7a" stroke-width="0.60"/>
<line x1="273.00" y1="388.80" x2="311.30" y2="388.80" stroke="#c4c4c4" stroke-width="1.10"/>
<line x1="273.00" y1="397.00" x2="311.30" y2="397.00" stroke="#c4c4c4" stroke-width="1.10"/>
<line x1="273.00" y1="404.90" x2="311.30" y2="404.90" stroke="#c4c4c4" stroke-width="1.10"/>
<line x1="273.00" y1="412.80" x2="311.30" y2="412.80" stroke="#c4c4c4" stroke-width="1.10"/>
<line x1="273.00" y1="388.80" x2="273.00" y2="420.50" stroke="#3c3c3c" stroke-width="1.10"/>
<line x1="269.70" y1="393.00" x2="273.00" y2="393.00" stroke="#3c3c3c" stroke-width="1.10"/>
<line x1="269.70" y1="400.90" x2="273.00" y2="400.90" stroke="#3c3c3c" stroke-width="1.10"/>
<line x1="269.70" y1="408.80" x2="273.00" y2="408.80" stroke="#3c3c3c" stroke-width="1.10"/>
<line x1="269.70" y1="416.70" x2="273.00" y2="416.70" stroke="#3c3c3c" stroke-width="1.10"/>
<line x1="273.00" y1="420.50" x2="311.30" y2="420.50" stroke="#3c3c3c" stroke-width="1.20"/>
<path d="M276.70 411.50 L283.60 402.00 L293.20 411.50 L308.00 395.70" fill="none" stroke="#3c3c3c" stroke-width="1.50"/>
<rect x="274.80" y="409.60" width="3.80" height="3.80" fill="#3c3c3c"/>
<rect x="281.70" y="400.10" width="3.80" height="3.80" fill="#3c3c3c"/>
<rect x="291.30" y="409.60" width="3.80" height="3.80" fill="#3c3c3c"/>
<rect x="306.10" y="393.80" width="3.80" height="3.80" fill="#3c3c3c"/>
<line x1="275.10" y1="407.50" x2="278.30" y2="407.50" stroke="#3c3c3c" stroke-width="0.90"/>
<line x1="282.00" y1="398.00" x2="285.20" y2="398.00" stroke="#3c3c3c" stroke-width="0.90"/>
<line x1="291.60" y1="407.50" x2="294.80" y2="407.50" stroke="#3c3c3c" stroke-width="0.90"/>
<line x1="306.40" y1="391.70" x2="309.60" y2="391.70" stroke="#3c3c3c" stroke-width="0.90"/>
<line x1="276.50" y1="424.70" x2="280.10" y2="424.70" stroke="#3c3c3c" stroke-width="1.10"/>
<line x1="285.50" y1="424.70" x2="289.10" y2="424.70" stroke="#3c3c3c" stroke-width="1.10"/>
<line x1="295.00" y1="424.70" x2="298.60" y2="424.70" stroke="#3c3c3c" stroke-width="1.10"/>
<line x1="304.60" y1="424.70" x2="308.20" y2="424.70" stroke="#3c3c3c" stroke-width="1.10"/>
<rect x="314.00" y="396.70" width="12.20" height="15.20" fill="#ffffff" stroke="#3c3c3c" stroke-width="1.10"/>
<rect x="316.50" y="400.97" width="1.60" height="1.60" fill="#888888"/>
<line x1="319.00" y1="401.27" x2="323.20" y2="401.27" stroke="#999999" stroke-width="0.70"/>
<rect x="316.50" y="406.03" width="1.60" height="1.60" fill="#888888"/>
<line x1="319.00" y1="406.33" x2="323.20" y2="406.33" stroke="#999999" stroke-width="0.70"/>
<rect x="134.10" y="449.70" width="31.70" height="3.40" fill="#9a9a9a" stroke="#7a7a7a" stroke-width="0.60"/>
<line x1="127.80" y1="459.50" x2="164.80" y2="459.50" stroke="#c4c4c4" stroke-width="1.10"/>
<line x1="127.80" y1="467.40" x2="164.80" y2="467.40" stroke="#c4c4c4" stroke-width="1.10"/>
<line x1="127.80" y1="475.40" x2="164.80" y2="475.40" stroke="#c4c4c4" stroke-width="1.10"/>
<line x1="127.80" y1="483.30" x2="164.80" y2="483.30" stroke="#c4c4c4" stroke-width="1.10"/>
<line x1="127.80" y1="459.20" x2="127.80" y2="491.30" stroke="#3c3c3c" stroke-width="1.10"/>
<line x1="124.50" y1="463.20" x2="127.80" y2="463.20" stroke="#3c3c3c" stroke-width="1.10"/>
<line x1="124.50" y1="471.10" x2="127.80" y2="471.10" stroke="#3c3c3c" stroke-width="1.10"/>
<line x1="124.50" y1="479.00" x2="127.80" y2="479.00" stroke="#3c3c3c" stroke-width="1.10"/>
<line x1="124.50" y1="486.90" x2="127.80" y2="486.90" stroke="#3c3c3c" stroke-width="1.10"/>
<line x1="127.80" y1="491.30" x2="164.80" y2="491.30" stroke="#3c3c3c" stroke-width="1.20"/>
<rect x="120.70" y="464.50" width="1.80" height="21.90" fill="#9a9a9a"/>
<line x1="134.70" y1="462.10" x2="134.70" y2="491.30" stroke="#777777" stroke-width="0.80" stroke-dasharray="1.2 1.2"/>
<line x1="157.10" y1="462.10" x2="157.10" y2="491.30" stroke="#777777" stroke-width="0.80" stroke-dasharray="1.2 1.2"/>
<path d="M134.70 470.10 L157.10 478.10" fill="none" stroke="#3c3c3c" stroke-width="1.50"/>
<rect x="132.80" y="468.20" width="3.80" height="3.80" fill="#3c3c3c"/>
<rect x="155.20" y="476.20" width="3.80" height="3.80" fill="#3c3c3c"/>
<path d="M134.70 486.00 L157.10 462.10" fill="none" stroke="#3c3c3c" stroke-width="1.50"/>
<rect x="132.80" y="484.10" width="3.80" height="3.80" fill="#3c3c3c"/>
<rect x="155.20" y="460.20" width="3.80" height="3.80" fill="#3c3c3c"/>
<line x1="130.00" y1="495.40" x2="133.60" y2="495.40" stroke="#3c3c3c" stroke-width="1.10"/>
<line x1="139.30" y1="495.40" x2="142.90" y2="495.40" stroke="#3c3c3c" stroke-width="1.10"/>
<line x1="148.50" y1="495.40" x2="152.10" y2="495.40" stroke="#3c3c3c" stroke-width="1.10"/>
<line x1="158.50" y1="495.40" x2="162.10" y2="495.40" stroke="#3c3c3c" stroke-width="1.10"/>
<rect x="134.10" y="499.10" width="23.40" height="2.20" fill="#8a8a8a"/>
<rect x="166.50" y="467.40" width="12.10" height="15.00" fill="#ffffff" stroke="#3c3c3c" stroke-width="1.10"/>
<rect x="169.00" y="471.60" width="1.60" height="1.60" fill="#888888"/>
<line x1="171.50" y1="471.90" x2="175.60" y2="471.90" stroke="#999999" stroke-width="0.70"/>
<rect x="169.00" y="476.60" width="1.60" height="1.60" fill="#888888"/>
<line x1="171.50" y1="476.90" x2="175.60" y2="476.90" stroke="#999999" stroke-width="0.70"/>
<path d="M200.80 482.10 L214.40 474.20 L226.60 486.30 L247.70 463.60" fill="none" stroke="#3c3c3c" stroke-width="1.50"/>
<rect x="198.90" y="480.20" width="3.80" height="3.80" fill="#3c3c3c"/>
<rect x="212.50" y="472.30" width="3.80" height="3.80" fill="#3c3c3c"/>
<rect x="224.70" y="484.40" width="3.80" height="3.80" fill="#3c3c3c"/>
<rect x="245.80" y="461.70" width="3.80" height="3.80" fill="#3c3c3c"/>
<line x1="273.00" y1="459.50" x2="311.30" y2="459.50" stroke="#c4c4c4" stroke-width="1.10"/>
<line x1="273.00" y1="467.40" x2="311.30" y2="467.40" stroke="#c4c4c4" stroke-width="1.10"/>
<line x1="273.00" y1="475.40" x2="311.30" y2="475.40" stroke="#c4c4c4" stroke-width="1.10"/>
<line x1="273.00" y1="483.30" x2="311.30" y2="483.30" stroke="#c4c4c4" stroke-width="1.10"/>
<line x1="273.00" y1="459.20" x2="273.00" y2="491.30" stroke="#3c3c3c" stroke-width="1.10"/>
<line x1="269.70" y1="463.20" x2="273.00" y2="463.20" stroke="#3c3c3c" stroke-width="1.10"/>
<line x1="269.70" y1="471.10" x2="273.00" y2="471.10" stroke="#3c3c3c" stroke-width="1.10"/>
<line x1="269.70" y1="479.00" x2="273.00" y2="479.00" stroke="#3c3c3c" stroke-width="1.10"/>
<line x1="269.70" y1="486.90" x2="273.00" y2="486.90" stroke="#3c3c3c" stroke-width="1.10"/>
<line x1="273.00" y1="491.30" x2="311.30" y2="491.30" stroke="#3c3c3c" stroke-width="1.20"/>
<path d="M276.70 479.00 L283.60 470.10 L293.20 479.00 L308.00 463.60" fill="none" stroke="#3c3c3c" stroke-width="1.50"/>
<rect x="274.80" y="477.10" width="3.80" height="3.80" fill="#3c3c3c"/>
<rect x="281.70" y="468.20" width="3.80" height="3.80" fill="#3c3c3c"/>
<rect x="291.30" y="477.10" width="3.80" height="3.80" fill="#3c3c3c"/>
<rect x="306.10" y="461.70" width="3.80" height="3.80" fill="#3c3c3c"/>
<line x1="276.50" y1="495.40" x2="280.10" y2="495.40" stroke="#3c3c3c" stroke-width="1.10"/>
<line x1="285.50" y1="495.40" x2="289.10" y2="495.40" stroke="#3c3c3c" stroke-width="1.10"/>
<line x1="295.00" y1="495.40" x2="298.60" y2="495.40" stroke="#3c3c3c" stroke-width="1.10"/>
<line x1="304.60" y1="495.40" x2="308.20" y2="495.40" stroke="#3c3c3c" stroke-width="1.10"/>
<rect x="314.00" y="467.40" width="12.20" height="15.00" fill="#ffffff" stroke="#3c3c3c" stroke-width="1.10"/>
<rect x="316.50" y="471.60" width="1.60" height="1.60" fill="#888888"/>
<line x1="319.00" y1="471.90" x2="323.20" y2="471.90" stroke="#999999" stroke-width="0.70"/>
<rect x="316.50" y="476.60" width="1.60" height="1.60" fill="#888888"/>
<line x1="319.00" y1="476.90" x2="323.20" y2="476.90" stroke="#999999" stroke-width="0.70"/>
<circle cx="353.50" cy="526.50" r="0.90" fill="#8a8a8a"/>
<circle cx="348.50" cy="531.50" r="0.90" fill="#8a8a8a"/>
<circle cx="353.50" cy="531.50" r="0.90" fill="#8a8a8a"/>
</svg></body></html>
